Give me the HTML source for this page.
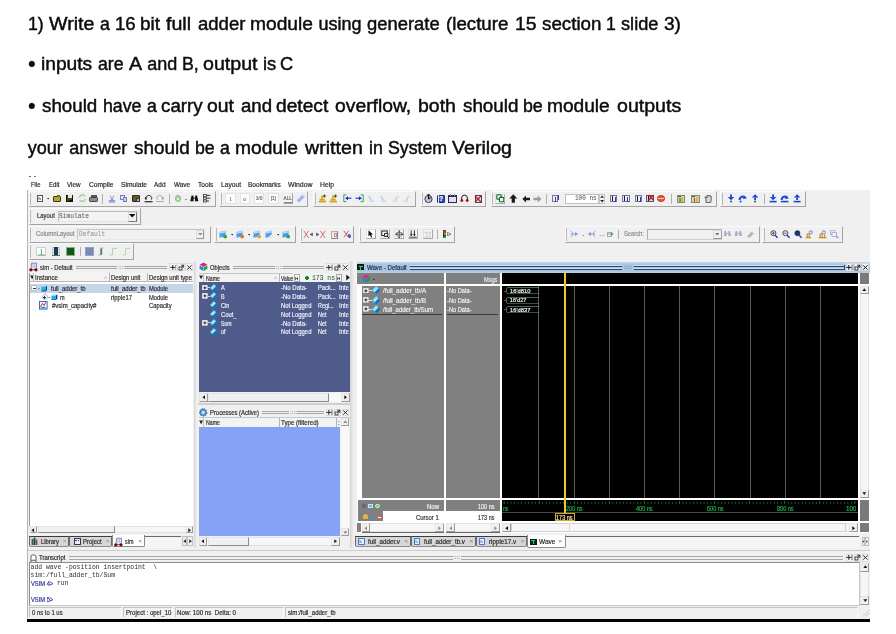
<!DOCTYPE html>
<html><head><meta charset="utf-8"><title>16 bit full adder</title>
<style>
html,body{margin:0;padding:0;background:#fff;}
body{width:896px;height:634px;position:relative;overflow:hidden;will-change:transform;font-family:"Liberation Sans",sans-serif;}
div,span,svg{position:absolute;box-sizing:border-box;}
span{white-space:pre;-webkit-text-stroke:0.18px;}
.tb{background:#f0f0f0;border-right:1px solid #a3a3a3;border-bottom:1px solid #a3a3a3;border-left:1px solid #fafafa;border-top:1px solid #fafafa;}
.sb{background:#f0f0f0;border:0.5px solid #d8d8d8;}
.btn{background:#f0f0f0;border:0.5px solid #bdbdbd;}
</style></head><body>
<span style="left:27.59px;top:13.56px;font-size:18px;line-height:21.6px;color:#0c0c0c;transform:scaleX(0.985);transform-origin:0 0;-webkit-text-stroke:0.45px;">1)</span>
<span style="left:48.80px;top:13.56px;font-size:18px;line-height:21.6px;color:#0c0c0c;transform:scaleX(1.090);transform-origin:0 0;-webkit-text-stroke:0.45px;">Write</span>
<span style="left:100.25px;top:13.56px;font-size:18px;line-height:21.6px;color:#0c0c0c;transform:scaleX(0.985);transform-origin:0 0;-webkit-text-stroke:0.45px;">a</span>
<span style="left:114.54px;top:13.56px;font-size:18px;line-height:21.6px;color:#0c0c0c;transform:scaleX(1.035);transform-origin:0 0;-webkit-text-stroke:0.45px;">16</span>
<span style="left:140.02px;top:13.56px;font-size:18px;line-height:21.6px;color:#0c0c0c;transform:scaleX(1.053);transform-origin:0 0;-webkit-text-stroke:0.45px;">bit</span>
<span style="left:166.10px;top:13.56px;font-size:18px;line-height:21.6px;color:#0c0c0c;transform:scaleX(1.090);transform-origin:0 0;-webkit-text-stroke:0.45px;">full</span>
<span style="left:197.72px;top:13.56px;font-size:18px;line-height:21.6px;color:#0c0c0c;transform:scaleX(1.029);transform-origin:0 0;-webkit-text-stroke:0.45px;">adder</span>
<span style="left:250.40px;top:13.56px;font-size:18px;line-height:21.6px;color:#0c0c0c;transform:scaleX(1.067);transform-origin:0 0;-webkit-text-stroke:0.45px;">module</span>
<span style="left:318.47px;top:13.56px;font-size:18px;line-height:21.6px;color:#0c0c0c;-webkit-text-stroke:0.45px;">using</span>
<span style="left:367.03px;top:13.56px;font-size:18px;line-height:21.6px;color:#0c0c0c;transform:scaleX(1.022);transform-origin:0 0;-webkit-text-stroke:0.45px;">generate</span>
<span style="left:446.12px;top:13.56px;font-size:18px;line-height:21.6px;color:#0c0c0c;transform:scaleX(1.040);transform-origin:0 0;-webkit-text-stroke:0.45px;">(lecture</span>
<span style="left:515.49px;top:13.56px;font-size:18px;line-height:21.6px;color:#0c0c0c;transform:scaleX(1.079);transform-origin:0 0;-webkit-text-stroke:0.45px;">15</span>
<span style="left:541.51px;top:13.56px;font-size:18px;line-height:21.6px;color:#0c0c0c;transform:scaleX(1.042);transform-origin:0 0;-webkit-text-stroke:0.45px;">section</span>
<span style="left:606.19px;top:13.56px;font-size:18px;line-height:21.6px;color:#0c0c0c;transform:scaleX(0.985);transform-origin:0 0;-webkit-text-stroke:0.45px;">1</span>
<span style="left:621.22px;top:13.56px;font-size:18px;line-height:21.6px;color:#0c0c0c;transform:scaleX(1.011);transform-origin:0 0;-webkit-text-stroke:0.45px;">slide</span>
<span style="left:663.60px;top:13.56px;font-size:18px;line-height:21.6px;color:#0c0c0c;transform:scaleX(1.061);transform-origin:0 0;-webkit-text-stroke:0.45px;">3)</span>
<span style="left:28.00px;top:51.27px;font-size:21.8px;line-height:26.16px;color:#0c0c0c;">•</span>
<span style="left:41.30px;top:53.86px;font-size:18px;line-height:21.6px;color:#0c0c0c;transform:scaleX(1.066);transform-origin:0 0;-webkit-text-stroke:0.45px;">inputs</span>
<span style="left:98.25px;top:53.86px;font-size:18px;line-height:21.6px;color:#0c0c0c;transform:scaleX(0.985);transform-origin:0 0;-webkit-text-stroke:0.45px;">are</span>
<span style="left:129.00px;top:53.86px;font-size:18px;line-height:21.6px;color:#0c0c0c;transform:scaleX(1.090);transform-origin:0 0;-webkit-text-stroke:0.45px;">A</span>
<span style="left:147.14px;top:53.86px;font-size:18px;line-height:21.6px;color:#0c0c0c;-webkit-text-stroke:0.45px;">and</span>
<span style="left:181.91px;top:53.86px;font-size:18px;line-height:21.6px;color:#0c0c0c;transform:scaleX(0.985);transform-origin:0 0;-webkit-text-stroke:0.45px;">B,</span>
<span style="left:202.79px;top:53.86px;font-size:18px;line-height:21.6px;color:#0c0c0c;transform:scaleX(1.090);transform-origin:0 0;-webkit-text-stroke:0.45px;">output</span>
<span style="left:263.06px;top:53.86px;font-size:18px;line-height:21.6px;color:#0c0c0c;transform:scaleX(1.017);transform-origin:0 0;-webkit-text-stroke:0.45px;">is</span>
<span style="left:279.84px;top:53.86px;font-size:18px;line-height:21.6px;color:#0c0c0c;transform:scaleX(1.015);transform-origin:0 0;-webkit-text-stroke:0.45px;">C</span>
<span style="left:28.00px;top:93.17px;font-size:21.8px;line-height:26.16px;color:#0c0c0c;">•</span>
<span style="left:42.31px;top:95.76px;font-size:18px;line-height:21.6px;color:#0c0c0c;transform:scaleX(1.042);transform-origin:0 0;-webkit-text-stroke:0.45px;">should</span>
<span style="left:103.09px;top:95.76px;font-size:18px;line-height:21.6px;color:#0c0c0c;transform:scaleX(0.985);transform-origin:0 0;-webkit-text-stroke:0.45px;">have</span>
<span style="left:147.05px;top:95.76px;font-size:18px;line-height:21.6px;color:#0c0c0c;transform:scaleX(0.985);transform-origin:0 0;-webkit-text-stroke:0.45px;">a</span>
<span style="left:161.11px;top:95.76px;font-size:18px;line-height:21.6px;color:#0c0c0c;transform:scaleX(1.042);transform-origin:0 0;-webkit-text-stroke:0.45px;">carry</span>
<span style="left:207.29px;top:95.76px;font-size:18px;line-height:21.6px;color:#0c0c0c;transform:scaleX(1.077);transform-origin:0 0;-webkit-text-stroke:0.45px;">out</span>
<span style="left:240.72px;top:95.76px;font-size:18px;line-height:21.6px;color:#0c0c0c;transform:scaleX(1.033);transform-origin:0 0;-webkit-text-stroke:0.45px;">and</span>
<span style="left:276.30px;top:95.76px;font-size:18px;line-height:21.6px;color:#0c0c0c;transform:scaleX(1.065);transform-origin:0 0;-webkit-text-stroke:0.45px;">detect</span>
<span style="left:335.20px;top:95.76px;font-size:18px;line-height:21.6px;color:#0c0c0c;transform:scaleX(1.073);transform-origin:0 0;-webkit-text-stroke:0.45px;">overflow,</span>
<span style="left:417.68px;top:95.76px;font-size:18px;line-height:21.6px;color:#0c0c0c;transform:scaleX(1.082);transform-origin:0 0;-webkit-text-stroke:0.45px;">both</span>
<span style="left:462.61px;top:95.76px;font-size:18px;line-height:21.6px;color:#0c0c0c;transform:scaleX(1.045);transform-origin:0 0;-webkit-text-stroke:0.45px;">should</span>
<span style="left:523.39px;top:95.76px;font-size:18px;line-height:21.6px;color:#0c0c0c;transform:scaleX(0.985);transform-origin:0 0;-webkit-text-stroke:0.45px;">be</span>
<span style="left:547.40px;top:95.76px;font-size:18px;line-height:21.6px;color:#0c0c0c;transform:scaleX(1.063);transform-origin:0 0;-webkit-text-stroke:0.45px;">module</span>
<span style="left:616.79px;top:95.76px;font-size:18px;line-height:21.6px;color:#0c0c0c;transform:scaleX(1.088);transform-origin:0 0;-webkit-text-stroke:0.45px;">outputs</span>
<span style="left:27.80px;top:137.76px;font-size:18px;line-height:21.6px;color:#0c0c0c;-webkit-text-stroke:0.45px;">your</span>
<span style="left:69.14px;top:137.76px;font-size:18px;line-height:21.6px;color:#0c0c0c;-webkit-text-stroke:0.45px;">answer</span>
<span style="left:134.10px;top:137.76px;font-size:18px;line-height:21.6px;color:#0c0c0c;transform:scaleX(1.051);transform-origin:0 0;-webkit-text-stroke:0.45px;">should</span>
<span style="left:195.19px;top:137.76px;font-size:18px;line-height:21.6px;color:#0c0c0c;transform:scaleX(0.985);transform-origin:0 0;-webkit-text-stroke:0.45px;">be</span>
<span style="left:220.35px;top:137.76px;font-size:18px;line-height:21.6px;color:#0c0c0c;transform:scaleX(0.985);transform-origin:0 0;-webkit-text-stroke:0.45px;">a</span>
<span style="left:234.80px;top:137.76px;font-size:18px;line-height:21.6px;color:#0c0c0c;transform:scaleX(1.067);transform-origin:0 0;-webkit-text-stroke:0.45px;">module</span>
<span style="left:305.01px;top:137.76px;font-size:18px;line-height:21.6px;color:#0c0c0c;transform:scaleX(1.090);transform-origin:0 0;-webkit-text-stroke:0.45px;">written</span>
<span style="left:369.49px;top:137.76px;font-size:18px;line-height:21.6px;color:#0c0c0c;transform:scaleX(0.985);transform-origin:0 0;-webkit-text-stroke:0.45px;">in</span>
<span style="left:388.45px;top:137.76px;font-size:18px;line-height:21.6px;color:#0c0c0c;transform:scaleX(0.985);transform-origin:0 0;-webkit-text-stroke:0.45px;">System</span>
<span style="left:452.00px;top:137.76px;font-size:18px;line-height:21.6px;color:#0c0c0c;transform:scaleX(1.090);transform-origin:0 0;-webkit-text-stroke:0.45px;">Verilog</span>
<div style="left:27px;top:179px;width:843.2px;height:440px;background:#f0f0f0;"></div>
<div style="left:27px;top:179px;width:843.2px;height:11px;background:#ffffff;"></div>
<div style="left:27px;top:618.8px;width:843.2px;height:3.4px;background:#000;"></div>
<span style="left:31.00px;top:181.26px;font-size:6.4px;line-height:7.68px;color:#2a2a2a;transform:scaleX(0.921);transform-origin:0 0;">File</span>
<span style="left:48.50px;top:181.26px;font-size:6.4px;line-height:7.68px;color:#2a2a2a;transform:scaleX(0.953);transform-origin:0 0;">Edit</span>
<span style="left:67.00px;top:181.26px;font-size:6.4px;line-height:7.68px;color:#2a2a2a;transform:scaleX(0.982);transform-origin:0 0;">View</span>
<span style="left:88.50px;top:181.26px;font-size:6.4px;line-height:7.68px;color:#2a2a2a;transform:scaleX(1.045);transform-origin:0 0;">Compile</span>
<span style="left:120.50px;top:181.26px;font-size:6.4px;line-height:7.68px;color:#2a2a2a;transform:scaleX(1.045);transform-origin:0 0;">Simulate</span>
<span style="left:154.00px;top:181.26px;font-size:6.4px;line-height:7.68px;color:#2a2a2a;transform:scaleX(1.011);transform-origin:0 0;">Add</span>
<span style="left:174.00px;top:181.26px;font-size:6.4px;line-height:7.68px;color:#2a2a2a;transform:scaleX(0.993);transform-origin:0 0;">Wave</span>
<span style="left:197.60px;top:181.26px;font-size:6.4px;line-height:7.68px;color:#2a2a2a;transform:scaleX(1.032);transform-origin:0 0;">Tools</span>
<span style="left:220.50px;top:181.26px;font-size:6.4px;line-height:7.68px;color:#2a2a2a;transform:scaleX(1.041);transform-origin:0 0;">Layout</span>
<span style="left:247.80px;top:181.26px;font-size:6.4px;line-height:7.68px;color:#2a2a2a;transform:scaleX(1.023);transform-origin:0 0;">Bookmarks</span>
<span style="left:288.00px;top:181.26px;font-size:6.4px;line-height:7.68px;color:#2a2a2a;transform:scaleX(1.078);transform-origin:0 0;">Window</span>
<span style="left:320.00px;top:181.26px;font-size:6.4px;line-height:7.68px;color:#2a2a2a;transform:scaleX(1.064);transform-origin:0 0;">Help</span>
<div class="tb" style="left:28.5px;top:190.5px;width:187.1px;height:16.7px;"></div>
<div style="left:30.1px;top:192.5px;width:0.7px;height:12.7px;background:#b8b8b8;"></div>
<div style="left:37.2px;top:194.9px;width:5.6px;height:7.4px;background:#fbfbfb;border:0.7px solid #555;"></div>
<span style="left:38.60px;top:197.40px;font-size:4px;line-height:4.8px;color:#555;">h</span>
<svg style="left:46.8px;top:198.4px;" width="2.4" height="1.4" viewBox="0 0 2.4 1.4"><polygon points="0,0 2.4,0 1.2,1.4" fill="#333"/></svg>
<div style="left:53px;top:196.2px;width:8px;height:5.6px;background:#b8a62c;border:0.7px solid #3a3a10;border-radius:1px;"></div>
<div style="left:56.9px;top:195.2px;width:3.4px;height:1.6px;background:#7a6d10;"></div>
<div style="left:65.7px;top:194.7px;width:7.8px;height:7.8px;background:#4a4a08;border:0.8px solid #111;"></div>
<div style="left:67.5px;top:195.3px;width:4.2px;height:3px;background:#e8e8d8;"></div>
<div style="left:68.7px;top:200.3px;width:3px;height:1.8px;background:#111;"></div>
<svg style="left:77.5px;top:194.4px;" width="8.6" height="8.4" viewBox="0 0 8.6 8.4"><path d="M1.2 3.6 A3.2 3.2 0 0 1 7 2.4 M7.4 4.8 A3.2 3.2 0 0 1 1.6 6" fill="none" stroke="#a6d6a0" stroke-width="1.7"/></svg>
<div style="left:89.3px;top:196.7px;width:9px;height:5px;background:#8c8c8c;border:0.7px solid #444;border-radius:1.2px;"></div>
<div style="left:91px;top:194.9px;width:6px;height:2.6px;background:#c8c8c8;border:0.6px solid #555;"></div>
<div style="left:102.2px;top:194px;width:0.8px;height:9.5px;background:#b0b0b0;"></div>
<svg style="left:108px;top:194.6px;" width="8" height="8" viewBox="0 0 8 8"><path d="M2 0.6 L5.4 6 M6 0.6 L2.6 6" stroke="#8d93c9" stroke-width="1"/><circle cx="2.4" cy="6.4" r="1.1" fill="none" stroke="#4a55c4" stroke-width="0.8"/><circle cx="5.6" cy="6.4" r="1.1" fill="none" stroke="#4a55c4" stroke-width="0.8"/></svg>
<div style="left:120.4px;top:194.7px;width:4.4px;height:5.4px;background:#e4e8f4;border:0.6px solid #6d7fb4;"></div>
<div style="left:122.8px;top:196.7px;width:4.4px;height:5.4px;background:#c9d3ea;border:0.6px solid #6d7fb4;"></div>
<div style="left:132.3px;top:195.2px;width:7.4px;height:7.2px;background:#6b5a1a;border:0.7px solid #222;border-radius:1px;"></div>
<div style="left:134.2px;top:194.7px;width:3.6px;height:1.8px;background:#333;"></div>
<div style="left:135.7px;top:198px;width:4.2px;height:4.4px;background:#aab4e0;border:0.5px solid #334;"></div>
<svg style="left:143.6px;top:194.2px;" width="9.6" height="9" viewBox="0 0 9.6 9"><path d="M2.2 5.4 A3 2.6 0 1 1 7.2 5.6" fill="none" stroke="#222" stroke-width="0.9"/><polygon points="0.6,3.4 3.4,3.6 1.6,6" fill="#222"/><rect x="0.6" y="7.2" width="8" height="1.1" fill="#111"/></svg>
<svg style="left:155px;top:194.2px;" width="9.6" height="9" viewBox="0 0 9.6 9"><path d="M2.4 5.6 A3 2.6 0 1 1 7.4 5.4" fill="none" stroke="#9a9a9a" stroke-width="0.8"/><polygon points="9,3.4 6.2,3.6 8,6" fill="#9a9a9a"/><rect x="1" y="7.2" width="8" height="0.8" fill="#9a9a9a"/></svg>
<div style="left:168.5px;top:194px;width:0.8px;height:9.5px;background:#b0b0b0;"></div>
<div style="left:174.8px;top:195.4px;width:6.4px;height:6.4px;background:#a9d3a2;border-radius:50%;border:0.6px solid #8cc084;"></div>
<div style="left:176.9px;top:197.5px;width:2.2px;height:2.2px;background:#e8f6e6;border-radius:50%;"></div>
<svg style="left:185px;top:198.5px;" width="2" height="1.2" viewBox="0 0 2 1.2"><polygon points="0,0 2,0 1.0,1.2" fill="#555"/></svg>
<svg style="left:190.4px;top:194.8px;" width="8.8" height="7.6" viewBox="0 0 8.8 7.6"><path d="M1.6 0.6 h1.8 v2 h1.8 v-2 h1.8 l1.4 5.6 h-3.4 v-2.6 h-1.4 v2.6 h-3.4 z" fill="#111"/></svg>
<svg style="left:203px;top:194.4px;" width="8" height="8.4" viewBox="0 0 8 8.4"><rect x="0.6" y="0.4" width="2.8" height="2" fill="none" stroke="#222" stroke-width="0.7"/><rect x="0.6" y="3.2" width="2.8" height="2" fill="none" stroke="#222" stroke-width="0.7"/><rect x="0.6" y="6" width="2.8" height="2" fill="none" stroke="#222" stroke-width="0.7"/><path d="M3.4 1.4 H7.4 M3.4 4.2 H7.4 M3.4 7 H6" stroke="#222" stroke-width="0.9"/></svg>
<div class="tb" style="left:219px;top:190.5px;width:89.3px;height:16.7px;"></div>
<div style="left:220.6px;top:192.5px;width:0.7px;height:12.7px;background:#b8b8b8;"></div>
<div style="left:225.3px;top:193.4px;width:10.4px;height:11px;background:#fdfdfd;border:0.6px solid #e2e2e2;"></div>
<span style="left:228.95px;top:195.28px;font-size:6.2px;line-height:7.44px;color:#6a6a6a;font-family:'Liberation Serif', serif;-webkit-text-stroke:0.05px;">1</span>
<div style="left:239.7px;top:193.4px;width:10.4px;height:11px;background:#fdfdfd;border:0.6px solid #e2e2e2;"></div>
<span style="left:243.35px;top:195.28px;font-size:6.2px;line-height:7.44px;color:#6a6a6a;font-family:'Liberation Serif', serif;-webkit-text-stroke:0.05px;">o</span>
<div style="left:253.8px;top:193.4px;width:10.4px;height:11px;background:#fdfdfd;border:0.6px solid #e2e2e2;"></div>
<span style="left:255.66px;top:196.12px;font-size:4.8px;line-height:5.76px;color:#6a6a6a;">1/0</span>
<div style="left:268.2px;top:193.4px;width:10.4px;height:11px;background:#fdfdfd;border:0.6px solid #e2e2e2;"></div>
<span style="left:270.73px;top:196.12px;font-size:4.8px;line-height:5.76px;color:#6a6a6a;">[1]</span>
<div style="left:282.5px;top:193.4px;width:10.4px;height:11px;background:#f4f4f4;border:0.6px solid #eaeaea;border-right-color:#a0a0a0;border-bottom-color:#a0a0a0;"></div>
<span style="left:283.61px;top:196.04px;font-size:4.6px;line-height:5.52px;color:#6a6a6a;">ALL</span>
<div style="left:283.8px;top:201.6px;width:7.8px;height:0.6px;background:#8a8a8a;"></div>
<svg style="left:295.8px;top:194.2px;" width="9.6" height="9" viewBox="0 0 9.6 9"><path d="M1 7 L6.4 1.6 L8.6 3.4 L3.2 8.6 Z" fill="#a4b8ec" stroke="#8a9ad8" stroke-width="0.5" transform="translate(0,-0.6)"/><path d="M6.4 1 L8.8 3" stroke="#c8d4f4" stroke-width="1.2"/></svg>
<div class="tb" style="left:313px;top:190.5px;width:102.6px;height:16.7px;"></div>
<div style="left:314.6px;top:192.5px;width:0.7px;height:12.7px;background:#b8b8b8;"></div>
<svg style="left:317.8px;top:194px;" width="9.2" height="9.2" viewBox="0 0 9.2 9.2"><path d="M0.6 7.6 H8 M1.6 5.6 H6.8 M4 5.6 V2.4 H6" fill="none" stroke="#d4aa1c" stroke-width="1.7"/><path d="M6.6 0.4 V3.6 M5 2 H8.2" stroke="#3a3004" stroke-width="0.8"/></svg>
<svg style="left:329.4px;top:194px;" width="9.2" height="9.2" viewBox="0 0 9.2 9.2"><path d="M0.6 7.6 H8 M1.6 5.6 H6.8 M4 5.6 V2.4 H6" fill="none" stroke="#d4aa1c" stroke-width="1.7"/><path d="M6.6 0.4 V3.6 M5 2 H8.2" stroke="#3a3004" stroke-width="0.8"/></svg>
<svg style="left:343px;top:194.2px;" width="9" height="9" viewBox="0 0 9 9"><path d="M3.4 0.8 H0.8 V7.6 H3.4" fill="none" stroke="#1f9a45" stroke-width="0.9"/><path d="M3 4.2 H8.4" stroke="#2222dd" stroke-width="1.1"/><polygon points="2.2,4.2 5,2.2 5,6.2" fill="#2222dd"/></svg>
<svg style="left:354.6px;top:194.2px;" width="9" height="9" viewBox="0 0 9 9"><path d="M5.6 0.8 H8.2 V7.6 H5.6" fill="none" stroke="#1f9a45" stroke-width="0.9"/><path d="M0.6 4.2 H6" stroke="#2222dd" stroke-width="1.1"/><polygon points="6.8,4.2 4,2.2 4,6.2" fill="#2222dd"/></svg>
<svg style="left:367px;top:194.6px;" width="8" height="8" viewBox="0 0 8 8"><path d="M0.8 1.6 H3 V6.2 H7.2 M3 3.8 H5.4" fill="none" stroke="#aac0e8" stroke-width="0.8"/></svg>
<svg style="left:379px;top:194.6px;" width="8" height="8" viewBox="0 0 8 8"><path d="M0.8 1.6 H3 V6.2 H7.2 M3 3.8 H5.4" fill="none" stroke="#aac0e8" stroke-width="0.8"/></svg>
<svg style="left:391.5px;top:194.6px;" width="8" height="8" viewBox="0 0 8 8"><path d="M7.2 1.6 H4.6 V6.2 H0.8 M4.6 3.8 H2.4" fill="none" stroke="#b8c8e4" stroke-width="0.8"/></svg>
<svg style="left:403px;top:194.6px;" width="8" height="8" viewBox="0 0 8 8"><path d="M7.2 1.6 H4.6 V6.2 H0.8 M4.6 3.8 H2.4" fill="none" stroke="#b8c8e4" stroke-width="0.8"/></svg>
<div class="tb" style="left:420.5px;top:190.5px;width:65.3px;height:16.7px;"></div>
<div style="left:422.1px;top:192.5px;width:0.7px;height:12.7px;background:#b8b8b8;"></div>
<svg style="left:424.4px;top:194.2px;" width="9" height="9" viewBox="0 0 9 9"><circle cx="4.5" cy="5" r="3.6" fill="#c4c6d4" stroke="#2a2a3a" stroke-width="0.9"/><path d="M4.5 5 V0.6 M4.5 5 L6.6 3.6" stroke="#10102a" stroke-width="1.1"/><rect x="3.4" y="0.2" width="2.2" height="1.3" fill="#10102a"/></svg>
<div style="left:436.6px;top:194.6px;width:8px;height:8px;background:#2f55b4;border:0.7px solid #1a2f70;border-radius:1px;"></div>
<div style="left:437.7px;top:194.6px;width:1.4px;height:8px;background:#dfe6f8;"></div>
<span style="left:439.25px;top:195.06px;font-size:6.4px;line-height:7.68px;color:#fff;font-weight:bold;">?</span>
<div style="left:448px;top:195.5px;width:8.6px;height:7px;background:#dfe0f0;border:0.8px solid #2a2a50;"></div>
<div style="left:448px;top:195.4px;width:8.6px;height:2px;background:#2a2a50;"></div>
<div style="left:449.8px;top:194.4px;width:1.2px;height:2px;background:#8a90c0;"></div>
<div style="left:453.6px;top:194.4px;width:1.2px;height:2px;background:#8a90c0;"></div>
<svg style="left:460.2px;top:194.4px;" width="9" height="8.6" viewBox="0 0 9 8.6"><path d="M1.6 6 V4 A2.9 2.9 0 0 1 7.4 4 V6" fill="none" stroke="#222" stroke-width="1"/><circle cx="1.8" cy="6.4" r="1.5" fill="#a01818"/><circle cx="7.2" cy="6.4" r="1.5" fill="#a01818"/></svg>
<div style="left:474.5px;top:194.6px;width:7px;height:8px;background:#dfe3f0;border:0.6px solid #445;"></div>
<svg style="left:474.4px;top:194.6px;" width="8" height="8" viewBox="0 0 8 8"><path d="M1 1 L7 7 M7 1 L1 7" stroke="#c02020" stroke-width="1.4"/></svg>
<div class="tb" style="left:490.8px;top:190.5px;width:225.8px;height:16.7px;"></div>
<div style="left:492.4px;top:192.5px;width:0.7px;height:12.7px;background:#b8b8b8;"></div>
<div style="left:494.9px;top:193.6px;width:10px;height:10px;background:#f6f6f6;border:0.6px solid #e0e0e0;border-right-color:#a8a8a8;border-bottom-color:#a8a8a8;"></div>
<svg style="left:495.6px;top:194.4px;" width="8.6" height="8.6" viewBox="0 0 8.6 8.6"><rect x="0.8" y="0.8" width="4.4" height="4.4" rx="0.8" fill="#eaf6ea" stroke="#0c6a2c" stroke-width="1.1"/><rect x="3.4" y="3.4" width="4.4" height="4.4" rx="0.8" fill="#eaf6ea" stroke="#0c6a2c" stroke-width="1.1"/></svg>
<svg style="left:509px;top:194.2px;" width="8.6" height="9" viewBox="0 0 8.6 9"><polygon points="4.3,0.3 8.3,4.4 5.9,4.4 5.9,8.8 2.7,8.8 2.7,4.4 0.3,4.4" fill="#1a1a1a"/></svg>
<svg style="left:521.6px;top:194.6px;" width="8.8" height="8" viewBox="0 0 8.8 8"><polygon points="0.4,4 4,0.6 4,2.7 8.4,2.7 8.4,5.3 4,5.3 4,7.4" fill="#1a1a1a"/></svg>
<svg style="left:533.4px;top:194.6px;" width="8.8" height="8" viewBox="0 0 8.8 8"><polygon points="8.4,4 4.8,0.6 4.8,2.7 0.4,2.7 0.4,5.3 4.8,5.3 4.8,7.4" fill="#9c9c9c"/></svg>
<div style="left:546.3px;top:194px;width:0.8px;height:9.5px;background:#b0b0b0;"></div>
<div style="left:552.4px;top:194.8px;width:6px;height:7.6px;background:#eceef6;border:0.6px solid #778;"></div>
<div style="left:554.55px;top:196.5px;width:0.9px;height:5px;background:#3a4a9a;"></div>
<div style="left:558px;top:195.1px;width:1.2px;height:5px;background:#2a3ad0;"></div>
<div style="left:564.5px;top:193.8px;width:34px;height:10.2px;background:#ffffff;border:0.6px solid #c0c0c0;"></div>
<span style="left:574.60px;top:194.48px;font-size:7.2px;line-height:8.64px;color:#555;font-family:'Liberation Mono', monospace;-webkit-text-stroke:0.05px;transform:scaleX(0.834);transform-origin:0 0;">100 ns</span>
<div style="left:599.2px;top:193.8px;width:5.8px;height:10.2px;background:#f4f4f4;border:0.5px solid #c4c4c4;"></div>
<svg style="left:600px;top:195px;" width="4.2" height="8" viewBox="0 0 4.2 8"><polygon points="2.1,0.4 4,2.8 0.2,2.8" fill="#222"/><polygon points="2.1,7.4 4,5 0.2,5" fill="#222"/></svg>
<div style="left:609.7px;top:194.7px;width:7.4px;height:7.8px;background:#eceef6;border:0.6px solid #778;"></div>
<div style="left:611.75px;top:196px;width:0.9px;height:4.8px;background:#1a1a3a;"></div>
<div style="left:614.6px;top:196.8px;width:0.8px;height:4.4px;background:#2a3ad0;"></div>
<div style="left:614px;top:200.6px;width:2px;height:1.6px;background:#2a3ad0;"></div>
<div style="left:622.2px;top:194.7px;width:7.4px;height:7.8px;background:#eceef6;border:0.6px solid #778;"></div>
<div style="left:624.25px;top:196px;width:0.9px;height:4.8px;background:#1a1a3a;"></div>
<div style="left:627.1px;top:196.8px;width:0.8px;height:4.4px;background:#2a3ad0;"></div>
<div style="left:626.5px;top:200.6px;width:2px;height:1.6px;background:#2a3ad0;"></div>
<div style="left:634.7px;top:194.7px;width:7.4px;height:7.8px;background:#eceef6;border:0.6px solid #778;"></div>
<div style="left:636.75px;top:196px;width:0.9px;height:4.8px;background:#1a1a3a;"></div>
<div style="left:639.6px;top:196.8px;width:0.8px;height:4.4px;background:#2a3ad0;"></div>
<div style="left:639px;top:200.6px;width:2px;height:1.6px;background:#2a3ad0;"></div>
<div style="left:646.3px;top:194.7px;width:7.4px;height:7.8px;background:#dcdce8;border:0.6px solid #556;"></div>
<div style="left:648px;top:196.1px;width:1.2px;height:5px;background:#1a1a3a;"></div>
<svg style="left:647px;top:194.4px;" width="7.4" height="7.4" viewBox="0 0 7.4 7.4"><path d="M1.6 1 L6.6 6.2 M6.6 1 L1.6 6.2" stroke="#c01818" stroke-width="1.4"/></svg>
<div style="left:657.3px;top:195.1px;width:7.4px;height:7.4px;background:#e2503e;border-radius:50%;border:0.5px solid #c03828;"></div>
<div style="left:657.8px;top:198.15px;width:6.4px;height:1.3px;background:#f6cfc8;"></div>
<div style="left:670.5px;top:194px;width:0.8px;height:9.5px;background:#b0b0b0;"></div>
<div style="left:676.8px;top:195px;width:8.4px;height:8px;background:#d4d0c0;border:0.6px solid #8a8878;"></div>
<div style="left:681.3px;top:197.3px;width:2.2px;height:5px;background:#d8b838;"></div>
<div style="left:679.2px;top:198.4px;width:1.6px;height:4px;background:#58a868;"></div>
<div style="left:677.9px;top:195.8px;width:3px;height:1.6px;background:#3a6a3a;"></div>
<div style="left:691.3px;top:195px;width:8.4px;height:8px;background:#d4d0c0;border:0.6px solid #8a8878;"></div>
<div style="left:695.8px;top:197.3px;width:2.2px;height:5px;background:#d8b838;"></div>
<div style="left:693.7px;top:198.4px;width:1.6px;height:4px;background:#b04848;"></div>
<div style="left:692.4px;top:195.8px;width:3px;height:1.6px;background:#3a6a3a;"></div>
<svg style="left:704px;top:194.6px;" width="8.4" height="8.4" viewBox="0 0 8.4 8.4"><path d="M2 7.6 V4 L1 2.6 A0.8 0.8 0 0 1 2.4 2 L3 3 V1 A0.7 0.7 0 0 1 4.4 1 V0.8 A0.7 0.7 0 0 1 5.8 1 V1.4 A0.7 0.7 0 0 1 7.2 1.8 V5.4 L6.6 7.6 Z" fill="#d8d8d8" stroke="#2a2a2a" stroke-width="0.7"/></svg>
<div class="tb" style="left:720.2px;top:190.5px;width:85.6px;height:16.7px;"></div>
<div style="left:721.8px;top:192.5px;width:0.7px;height:12.7px;background:#b8b8b8;"></div>
<svg style="left:727.1px;top:194.2px;" width="8.2" height="9" viewBox="0 0 8.2 9"><rect x="3.2" y="0.4" width="1.8" height="3" fill="#1c48d4"/><polygon points="0.8,3 7.4,3 4.1,6.2" fill="#1c48d4"/><circle cx="4.1" cy="7.6" r="1" fill="#1c48d4"/></svg>
<svg style="left:737.9px;top:194.2px;" width="9" height="9" viewBox="0 0 9 9"><path d="M1.6 6 A3 3.4 0 0 1 6.6 3.4" fill="none" stroke="#1c48d4" stroke-width="2"/><polygon points="8.8,4.6 4.6,5 6.8,1.4" fill="#1c48d4"/><circle cx="2.6" cy="7.6" r="1" fill="#1c48d4"/></svg>
<svg style="left:751.2px;top:194.2px;" width="8.2" height="9" viewBox="0 0 8.2 9"><polygon points="0.8,3.6 7.4,3.6 4.1,0.3" fill="#1c48d4"/><rect x="3.2" y="3.4" width="1.8" height="2.6" fill="#1c48d4"/><circle cx="4.1" cy="7.6" r="1" fill="#1c48d4"/></svg>
<div style="left:763.5px;top:194px;width:0.8px;height:9.5px;background:#b0b0b0;"></div>
<svg style="left:769px;top:194.2px;" width="8.2" height="9" viewBox="0 0 8.2 9"><rect x="3.2" y="0.4" width="1.8" height="3" fill="#1c48d4"/><polygon points="0.8,3 7.4,3 4.1,6.2" fill="#1c48d4"/><rect x="0.6" y="6.8" width="7" height="1.6" fill="#1c48d4"/></svg>
<svg style="left:780.3px;top:194.2px;" width="9" height="9" viewBox="0 0 9 9"><path d="M1.6 6 A3 3.4 0 0 1 6.6 3.4" fill="none" stroke="#1c48d4" stroke-width="2"/><polygon points="8.8,4.6 4.6,5 6.8,1.4" fill="#1c48d4"/><rect x="0.8" y="6.8" width="7.6" height="1.6" fill="#1c48d4"/></svg>
<svg style="left:793.2px;top:194.2px;" width="8.2" height="9" viewBox="0 0 8.2 9"><polygon points="0.8,3.6 7.4,3.6 4.1,0.3" fill="#1c48d4"/><rect x="3.2" y="3.4" width="1.8" height="2.6" fill="#1c48d4"/><rect x="0.6" y="6.8" width="7" height="1.6" fill="#1c48d4"/></svg>
<div class="tb" style="left:28.5px;top:208px;width:112.9px;height:17.4px;"></div>
<div style="left:30.1px;top:210px;width:0.7px;height:13.4px;background:#b8b8b8;"></div>
<span style="left:37.00px;top:212.42px;font-size:6.3px;line-height:7.56px;color:#333;transform:scaleX(0.941);transform-origin:0 0;">Layout</span>
<div style="left:58.2px;top:211px;width:79.4px;height:11.4px;background:#f3f3f3;border:0.6px solid #e4e4e4;border-top-color:#b8b8b8;border-left-color:#b8b8b8;"></div>
<span style="left:59.40px;top:212.28px;font-size:7.2px;line-height:8.64px;color:#555;font-family:'Liberation Mono', monospace;-webkit-text-stroke:0.05px;transform:scaleX(0.869);transform-origin:0 0;">Simulate</span>
<div style="left:127.6px;top:211.8px;width:9.2px;height:10px;background:#f0f0f0;border:0.6px solid #e0e0e0;border-right-color:#777;border-bottom-color:#777;"></div>
<svg style="left:128.8px;top:214.2px;" width="6.4" height="3.6" viewBox="0 0 6.4 3.6"><polygon points="0,0 6.4,0 3.2,3.6" fill="#0a0a0a"/></svg>
<div class="tb" style="left:28.5px;top:226px;width:182.3px;height:16.6px;"></div>
<div style="left:30.1px;top:228px;width:0.7px;height:12.6px;background:#b8b8b8;"></div>
<span style="left:36.40px;top:230.22px;font-size:6.3px;line-height:7.56px;color:#8a8a8a;transform:scaleX(0.951);transform-origin:0 0;">ColumnLayout</span>
<div style="left:77.4px;top:229.4px;width:127.6px;height:10.6px;background:#f1f1f1;border:0.6px solid #e8e8e8;border-top-color:#c4c4c4;border-left-color:#c4c4c4;"></div>
<span style="left:78.80px;top:230.28px;font-size:7.2px;line-height:8.64px;color:#909090;font-family:'Liberation Mono', monospace;-webkit-text-stroke:0.05px;transform:scaleX(0.867);transform-origin:0 0;">Default</span>
<div style="left:196px;top:230px;width:8.4px;height:9.4px;background:#f0f0f0;border:0.6px solid #d8d8d8;border-right-color:#999;border-bottom-color:#999;"></div>
<svg style="left:198.1px;top:232.9px;" width="4.6" height="2.6" viewBox="0 0 4.6 2.6"><polygon points="0,0 4.6,0 2.3,2.6" fill="#8a8a8a"/></svg>
<div class="tb" style="left:214px;top:226px;width:81.6px;height:16.6px;"></div>
<div style="left:215.6px;top:228px;width:0.7px;height:12.6px;background:#b8b8b8;"></div>
<svg style="left:218.9px;top:229.8px;" width="9.2" height="9" viewBox="0 0 9.2 9"><polygon points="0.6,2.2 6.6,0.8 6.6,6.4 0.6,7.6" fill="#4a9ce8" stroke="#8cc4f4" stroke-width="0.5"/><polygon points="0.6,2.2 6.6,0.8 6.6,2.4 0.6,3.8" fill="#b8dcf8"/><circle cx="6.2" cy="6.6" r="1.9" fill="#3aa43a"/></svg>
<svg style="left:230.7px;top:234.05px;" width="2.4" height="1.5" viewBox="0 0 2.4 1.5"><polygon points="0,0 2.4,0 1.2,1.5" fill="#222"/></svg>
<svg style="left:236.3px;top:229.8px;" width="9.2" height="9" viewBox="0 0 9.2 9"><polygon points="0.6,2.2 6.6,0.8 6.6,6.4 0.6,7.6" fill="#4a9ce8" stroke="#8cc4f4" stroke-width="0.5"/><polygon points="0.6,2.2 6.6,0.8 6.6,2.4 0.6,3.8" fill="#b8dcf8"/><circle cx="6.2" cy="6.6" r="1.9" fill="#e07a20"/></svg>
<svg style="left:247.7px;top:234.05px;" width="2.4" height="1.5" viewBox="0 0 2.4 1.5"><polygon points="0,0 2.4,0 1.2,1.5" fill="#222"/></svg>
<svg style="left:253px;top:229.8px;" width="9.2" height="9" viewBox="0 0 9.2 9"><polygon points="0.6,2.2 6.6,0.8 6.6,6.4 0.6,7.6" fill="#4a9ce8" stroke="#8cc4f4" stroke-width="0.5"/><polygon points="0.6,2.2 6.6,0.8 6.6,2.4 0.6,3.8" fill="#b8dcf8"/><circle cx="6.2" cy="6.6" r="1.9" fill="#e8a838"/></svg>
<svg style="left:265.1px;top:229.8px;" width="9.2" height="9" viewBox="0 0 9.2 9"><polygon points="0.6,2.2 6.6,0.8 6.6,6.4 0.6,7.6" fill="#4a9ce8" stroke="#8cc4f4" stroke-width="0.5"/><polygon points="0.6,2.2 6.6,0.8 6.6,2.4 0.6,3.8" fill="#b8dcf8"/><circle cx="6.2" cy="6.6" r="1.9" fill="#dce8fc"/></svg>
<svg style="left:276.8px;top:234.05px;" width="2.4" height="1.5" viewBox="0 0 2.4 1.5"><polygon points="0,0 2.4,0 1.2,1.5" fill="#222"/></svg>
<svg style="left:282.4px;top:229.8px;" width="9.2" height="9" viewBox="0 0 9.2 9"><polygon points="0.6,2.2 6.6,0.8 6.6,6.4 0.6,7.6" fill="#4a9ce8" stroke="#8cc4f4" stroke-width="0.5"/><polygon points="0.6,2.2 6.6,0.8 6.6,2.4 0.6,3.8" fill="#b8dcf8"/><circle cx="6.2" cy="6.6" r="1.9" fill="#2ea44a"/></svg>
<div class="tb" style="left:299.7px;top:226px;width:53.9px;height:16.6px;"></div>
<div style="left:301.3px;top:228px;width:0.7px;height:12.6px;background:#b8b8b8;"></div>
<svg style="left:302.6px;top:229.8px;" width="11" height="9" viewBox="0 0 11 9"><path d="M0.8 0.8 L5.6 8 M5.6 0.8 L0.8 8" stroke="#cc6868" stroke-width="0.9"/><polygon points="9.8,2.6 9.8,6.2 6.6,4.4" fill="#555"/></svg>
<svg style="left:315px;top:229.8px;" width="11" height="9" viewBox="0 0 11 9"><path d="M5.4 0.8 L10.2 8 M10.2 0.8 L5.4 8" stroke="#cc6868" stroke-width="0.9"/><polygon points="1.2,2.6 1.2,6.2 4.4,4.4" fill="#555"/></svg>
<div style="left:331.1px;top:230.6px;width:7.4px;height:8px;background:#eeeae8;border:0.6px solid #b4aca8;border-right-color:#8a8480;border-bottom-color:#8a8480;"></div>
<div style="left:333.5px;top:233px;width:3.4px;height:4.4px;background:#f4e8e8;border:0.5px solid #c89090;"></div>
<svg style="left:343.4px;top:229.8px;" width="9" height="9" viewBox="0 0 9 9"><path d="M0.8 0.8 L5.6 7.4 M5.6 0.8 L0.8 7.4" stroke="#cc5a5a" stroke-width="1"/><ellipse cx="6.4" cy="6" rx="1.5" ry="2" fill="#4a58d0" transform="rotate(-30 6.4 6)"/></svg>
<div class="tb" style="left:358.6px;top:226px;width:96.2px;height:16.6px;"></div>
<div style="left:360.2px;top:228px;width:0.7px;height:12.6px;background:#b8b8b8;"></div>
<div style="left:365.5px;top:229.2px;width:10px;height:10px;background:#ffffff;border:0.6px solid #e0e0e0;border-right-color:#a8a8a8;border-bottom-color:#a8a8a8;"></div>
<svg style="left:368px;top:230.4px;" width="5.6" height="7.8" viewBox="0 0 5.6 7.8"><polygon points="0.5,0.3 0.5,6.2 2,5 3.1,7.4 4.2,6.9 3.1,4.6 5,4.6" fill="#0a0a0a"/></svg>
<div style="left:380.4px;top:229.2px;width:10px;height:10px;background:#f4f4f4;border:0.6px solid #e0e0e0;border-right-color:#a8a8a8;border-bottom-color:#a8a8a8;"></div>
<svg style="left:381.2px;top:230.2px;" width="8.6" height="8.4" viewBox="0 0 8.6 8.4"><rect x="0.8" y="1" width="5.4" height="4.6" fill="#fff" stroke="#1a1a1a" stroke-width="1"/><rect x="3.6" y="3.4" width="3.2" height="3" fill="#fff" stroke="#1a1a1a" stroke-width="0.9"/><path d="M5.6 5.6 L8 8" stroke="#1a1a1a" stroke-width="1"/></svg>
<div style="left:394px;top:229.2px;width:10px;height:10px;background:#f4f4f4;border:0.6px solid #e0e0e0;border-right-color:#a8a8a8;border-bottom-color:#a8a8a8;"></div>
<svg style="left:394.8px;top:230px;" width="8.4" height="8.4" viewBox="0 0 8.4 8.4"><rect x="2" y="2.4" width="4.4" height="3.6" fill="none" stroke="#555" stroke-width="0.6"/><path d="M4.2 0.8 V7.6 M0.8 4.2 H7.6" stroke="#333" stroke-width="0.7"/><polygon points="4.2,0 5.3,1.5 3.1,1.5" fill="#333"/><polygon points="4.2,8.4 5.3,6.9 3.1,6.9" fill="#333"/><polygon points="0,4.2 1.5,3.1 1.5,5.3" fill="#333"/><polygon points="8.4,4.2 6.9,3.1 6.9,5.3" fill="#333"/></svg>
<div style="left:407.9px;top:229.2px;width:10px;height:10px;background:#f4f4f4;border:0.6px solid #e0e0e0;border-right-color:#a8a8a8;border-bottom-color:#a8a8a8;"></div>
<svg style="left:409px;top:230.4px;" width="7.8" height="7.8" viewBox="0 0 7.8 7.8"><path d="M2.2 0.4 V5.6 M5.4 0.4 V5.6" stroke="#1a1a1a" stroke-width="0.9"/><polygon points="2.2,6.2 0.9,4.2 3.5,4.2" fill="#1a1a1a"/><polygon points="5.4,6.2 4.1,4.2 6.7,4.2" fill="#1a1a1a"/><path d="M0.2 7.2 H7.6" stroke="#1a1a1a" stroke-width="0.8"/></svg>
<div style="left:422.7px;top:229.2px;width:10px;height:10px;background:#f4f4f4;border:0.6px solid #e0e0e0;border-right-color:#a8a8a8;border-bottom-color:#a8a8a8;"></div>
<svg style="left:423.8px;top:230.4px;" width="7.8" height="7.8" viewBox="0 0 7.8 7.8"><path d="M0.6 2.2 H3 V5.8 M4.6 2.2 H7 M5.8 2.2 V5.8 M0.4 7 H7.4" stroke="#b0b0b0" stroke-width="0.7" fill="none"/></svg>
<div style="left:437.1px;top:230px;width:0.8px;height:9.4px;background:#b0b0b0;"></div>
<div style="left:442.7px;top:230.1px;width:3.8px;height:8.2px;background:#143a1c;border-radius:0.8px;"></div>
<div style="left:443.45px;top:230.55px;width:2.3px;height:2.3px;background:#e82a2a;border-radius:50%;"></div>
<div style="left:443.55px;top:233.15px;width:2.1px;height:2.1px;background:#d8c030;border-radius:50%;"></div>
<div style="left:443.55px;top:235.65px;width:2.1px;height:2.1px;background:#30c848;border-radius:50%;"></div>
<svg style="left:447.2px;top:232px;" width="4.4" height="4.4" viewBox="0 0 4.4 4.4"><polygon points="0.4,0.4 4,2.2 0.4,4" fill="#f0f0f0" stroke="#333" stroke-width="0.6"/></svg>
<div class="tb" style="left:564.5px;top:226px;width:195.1px;height:16.8px;"></div>
<div style="left:566.1px;top:228px;width:0.7px;height:12.8px;background:#b8b8b8;"></div>
<svg style="left:570px;top:230.2px;" width="9" height="8" viewBox="0 0 9 8"><g transform=""><path d="M0.6 1.2 A3.4 3 0 0 1 0.6 6.8 M0.6 4 H5.4" fill="none" stroke="#7d9ad8" stroke-width="0.8"/><polygon points="8.2,4 5,2 5,6" fill="#7d9ad8"/></g></svg>
<span style="left:582.20px;top:231.50px;font-size:5.5px;line-height:6.6px;color:#555;">-</span>
<svg style="left:587px;top:230.2px;" width="9" height="8" viewBox="0 0 9 8"><g transform="translate(9,0) scale(-1,1)"><path d="M0.6 1.2 A3.4 3 0 0 1 0.6 6.8 M0.6 4 H5.4" fill="none" stroke="#7d9ad8" stroke-width="0.8"/><polygon points="8.2,4 5,2 5,6" fill="#7d9ad8"/></g></svg>
<span style="left:599.40px;top:231.50px;font-size:5.5px;line-height:6.6px;color:#555;">-</span>
<div style="left:607.4px;top:231.5px;width:4.4px;height:5.4px;background:#f8f8f8;border:0.5px solid #a0a8c0;"></div>
<svg style="left:607px;top:231.2px;" width="8" height="6" viewBox="0 0 8 6"><path d="M0.4 3 H4" stroke="#50a050" stroke-width="0.8"/><polygon points="6.6,3 3.8,1 3.8,5" fill="#50a050"/></svg>
<span style="left:602.60px;top:231.50px;font-size:5.5px;line-height:6.6px;color:#555;">-</span>
<div style="left:618.4px;top:230px;width:0.8px;height:9.4px;background:#b0b0b0;"></div>
<span style="left:624.00px;top:230.42px;font-size:6.3px;line-height:7.56px;color:#8a8a8a;transform:scaleX(0.912);transform-origin:0 0;">Search:</span>
<div style="left:647.4px;top:229.4px;width:74.6px;height:10.6px;background:#f1f1f1;border:0.6px solid #d0d0d0;border-top-color:#b0b0b0;border-left-color:#b0b0b0;"></div>
<div style="left:712.6px;top:230px;width:9px;height:9.4px;background:#f0f0f0;border:0.6px solid #d8d8d8;border-right-color:#999;border-bottom-color:#999;"></div>
<svg style="left:714.7px;top:233.1px;" width="4.6" height="2.6" viewBox="0 0 4.6 2.6"><polygon points="0,0 4.6,0 2.3,2.6" fill="#777"/></svg>
<svg style="left:723.2px;top:230.2px;" width="9" height="8" viewBox="0 0 9 8"><path d="M1.6 1 h1.6 v1.8 h2.2 v-1.8 h1.6 l1.2 5 h-3 v-2.2 h-1.6 v2.2 h-3 z" fill="#a8b0cc"/></svg>
<svg style="left:733.9px;top:230.2px;" width="9" height="8" viewBox="0 0 9 8"><path d="M1.6 1 h1.6 v1.8 h2.2 v-1.8 h1.6 l1.2 5 h-3 v-2.2 h-1.6 v2.2 h-3 z" fill="#a8b0cc"/></svg>
<svg style="left:745.5px;top:230.2px;" width="9" height="8" viewBox="0 0 9 8"><path d="M1 6.6 L5.6 1.6 L7.8 3.4 L3.4 8 Z" fill="#b4b4bc"/></svg>
<div class="tb" style="left:762px;top:226px;width:80.8px;height:16.8px;"></div>
<div style="left:763.6px;top:228px;width:0.7px;height:12.8px;background:#b8b8b8;"></div>
<svg style="left:769.5px;top:230.2px;" width="8.4" height="8.4" viewBox="0 0 8.4 8.4"><circle cx="3.4" cy="3.2" r="2.5" fill="#f4f4fc" stroke="#223" stroke-width="0.8"/><path d="M5.2 5.2 L7.6 7.8" stroke="#2a3ab0" stroke-width="1.5"/><path d="M2 3.2 H4.8 M3.4 1.8 V4.6" stroke="#223" stroke-width="0.7"/></svg>
<svg style="left:781.6px;top:230.2px;" width="8.4" height="8.4" viewBox="0 0 8.4 8.4"><circle cx="3.4" cy="3.2" r="2.5" fill="#f4f4fc" stroke="#223" stroke-width="0.8"/><path d="M5.2 5.2 L7.6 7.8" stroke="#2a3ab0" stroke-width="1.5"/><path d="M2 3.2 H4.8" stroke="#223" stroke-width="0.7"/></svg>
<svg style="left:794px;top:230.2px;" width="8.4" height="8.4" viewBox="0 0 8.4 8.4"><circle cx="3.4" cy="3.2" r="2.5" fill="#0a3a8a" stroke="#223" stroke-width="0.8"/><path d="M5.2 5.2 L7.6 7.8" stroke="#2a3ab0" stroke-width="1.5"/></svg>
<svg style="left:805.4px;top:230px;" width="9" height="8.6" viewBox="0 0 9 8.6"><path d="M0.8 7.6 H6 M2.2 7.4 V4 H4.2 V7.4" fill="none" stroke="#c88a1a" stroke-width="1.1"/><circle cx="5.8" cy="2.4" r="1.6" fill="#e8ecfc" stroke="#4a5ac0" stroke-width="0.7"/></svg>
<svg style="left:817.9px;top:230px;" width="9" height="8.6" viewBox="0 0 9 8.6"><path d="M0.8 7.6 H6 M2.2 7.4 V4 H4.2 V7.4" fill="none" stroke="#c88a1a" stroke-width="1.1"/><circle cx="5.8" cy="2.4" r="1.6" fill="#e8ecfc" stroke="#4a5ac0" stroke-width="0.7"/><path d="M6 7.6 H8.4 M6.6 7.4 V4.6" stroke="#c88a1a" stroke-width="1.1"/></svg>
<svg style="left:829.8px;top:230.2px;" width="9" height="8.4" viewBox="0 0 9 8.4"><rect x="0.6" y="0.8" width="4.4" height="4" fill="#eef" stroke="#8a94c8" stroke-width="0.6"/><rect x="2" y="2.4" width="4.4" height="4" fill="#eef" stroke="#8a94c8" stroke-width="0.6"/><path d="M6 6 L8.2 8" stroke="#7a86c0" stroke-width="1.1"/></svg>
<div class="tb" style="left:28.5px;top:243.4px;width:105.3px;height:16.8px;"></div>
<div style="left:30.1px;top:245.4px;width:0.7px;height:12.8px;background:#b8b8b8;"></div>
<div style="left:36.4px;top:246.8px;width:10px;height:9.6px;background:#fdfdfd;border:0.6px solid #cfcfcf;"></div>
<svg style="left:37px;top:247.6px;" width="9" height="8.4" viewBox="0 0 9 8.4"><path d="M4.4 1 V7 M1 7 H8" stroke="#5aa86a" stroke-width="0.9" fill="none"/></svg>
<div style="left:51.7px;top:246.9px;width:8.6px;height:9.4px;background:#e4e4e4;border:0.6px solid #c4c4c4;"></div>
<div style="left:54.1px;top:247.2px;width:4.2px;height:8.4px;background:#1a3a5c;"></div>
<div style="left:52px;top:255.35px;width:8px;height:0.9px;background:#4a7a5a;"></div>
<div style="left:65.6px;top:246.8px;width:9.6px;height:9.6px;background:#0f5a16;border:0.6px solid #8ab08a;"></div>
<div style="left:79.9px;top:247px;width:0.8px;height:9.4px;background:#b0b0b0;"></div>
<div style="left:84.7px;top:247.1px;width:9.4px;height:9px;background:#7b88b8;border:0.5px solid #98a2c8;"></div>
<svg style="left:97px;top:247.2px;" width="8" height="9" viewBox="0 0 8 9"><path d="M1 8 H3.4 V1 H6.6" stroke="#9ab89a" stroke-width="0.9" fill="none"/><rect x="3.6" y="1.4" width="1.6" height="6.4" fill="#55708a"/></svg>
<svg style="left:109px;top:247.2px;" width="8.6" height="9" viewBox="0 0 8.6 9"><path d="M0.6 7.8 H3.6 V1.4 H8" stroke="#a8cca8" stroke-width="0.9" fill="none"/></svg>
<svg style="left:121.6px;top:247.2px;" width="8.6" height="9" viewBox="0 0 8.6 9"><path d="M0.6 7.8 H3.6 V1.4 H8" stroke="#b4d48c" stroke-width="0.9" fill="none"/></svg>
<svg style="left:28.6px;top:262px;" width="9" height="10" viewBox="0 0 9 10"><path d="M2 7 L2.6 1.2 H7.6 L7.2 7" fill="#f4f6fc" stroke="#4a5a80" stroke-width="0.7"/><path d="M4.2 1.4 L3.8 6.4 M5.8 1.4 L5.6 6.4" stroke="#8a9ac8" stroke-width="0.7"/><path d="M1.8 7.8 H7" stroke="#5a0a0a" stroke-width="0.8"/><circle cx="1.8" cy="7.8" r="1.6" fill="#6a0a12"/><circle cx="7" cy="7.8" r="1.6" fill="#6a0a12"/></svg>
<span style="left:39.60px;top:263.82px;font-size:6.3px;line-height:7.56px;color:#2b2b2b;transform:scaleX(0.922);transform-origin:0 0;">sim - Default</span>
<div style="left:75.5px;top:265.7px;width:91.5px;height:0.7px;background:#a6a6a6;"></div>
<div style="left:75.5px;top:268px;width:91.5px;height:0.7px;background:#a6a6a6;"></div>
<div style="left:117px;top:265px;width:8px;height:4.4px;background:#f0f0f0;"></div>
<span style="left:117.50px;top:264.64px;font-size:4.6px;line-height:5.52px;color:#9a9a9a;transform:scaleX(1.370);transform-origin:0 0;">::::</span>
<div style="left:169.4px;top:263.4px;width:7.4px;height:7.6px;background:#f6f6f6;border:0.5px solid #dcdcdc;"></div>
<div style="left:177.4px;top:263.4px;width:7.4px;height:7.6px;background:#f6f6f6;border:0.5px solid #dcdcdc;"></div>
<div style="left:185.4px;top:263.4px;width:7.4px;height:7.6px;background:#f6f6f6;border:0.5px solid #dcdcdc;"></div>
<svg style="left:169.6px;top:263.8px;" width="6.8" height="6.8" viewBox="0 0 6.8 6.8"><path d="M2.8 1 V5.8 M0.4 3.4 H5.2" stroke="#222" stroke-width="1"/><path d="M5.9 0.8 V6" stroke="#222" stroke-width="0.6"/></svg>
<svg style="left:177.6px;top:263.8px;" width="6.8" height="6.8" viewBox="0 0 6.8 6.8"><rect x="1" y="3" width="3" height="3" fill="none" stroke="#222" stroke-width="0.8"/><path d="M3.2 1.2 H5.8 V4 M5.8 1.2 L3.6 3.4" fill="none" stroke="#222" stroke-width="0.9"/></svg>
<svg style="left:185.6px;top:263.8px;" width="6.8" height="6.8" viewBox="0 0 6.8 6.8"><path d="M1.2 1.4 L5.6 5.6 M5.6 1.4 L1.2 5.6" stroke="#222" stroke-width="0.95"/></svg>
<div style="left:29px;top:272.6px;width:164.4px;height:253.4px;background:#ffffff;border-left:1px solid #9a9a9a;border-top:0.6px solid #c8c8c8;"></div>
<div style="left:29.6px;top:273px;width:163.8px;height:9.4px;background:#f3f3f3;border-bottom:0.7px solid #b8b8b8;"></div>
<svg style="left:29.6px;top:275px;" width="4.2" height="4.6" viewBox="0 0 4.2 4.6"><polygon points="0.2,0.4 4,0.4 2.1,4.2" fill="#222"/></svg>
<div style="left:33.4px;top:273.4px;width:0.8px;height:8.6px;background:#c0c0c0;"></div>
<span style="left:35.00px;top:274.42px;font-size:6.3px;line-height:7.56px;color:#2b2b2b;transform:scaleX(0.957);transform-origin:0 0;">Instance</span>
<svg style="left:104px;top:275.8px;" width="3.4" height="3.4" viewBox="0 0 3.4 3.4"><polygon points="1.7,0.4 3.2,3 0.2,3" fill="none" stroke="#999" stroke-width="0.4"/></svg>
<div style="left:109.1px;top:273.4px;width:0.8px;height:8.6px;background:#b4b4b4;"></div>
<span style="left:111.00px;top:274.42px;font-size:6.3px;line-height:7.56px;color:#2b2b2b;transform:scaleX(0.933);transform-origin:0 0;">Design unit</span>
<div style="left:147.3px;top:273.4px;width:0.8px;height:8.6px;background:#b4b4b4;"></div>
<span style="left:149.00px;top:274.42px;font-size:6.3px;line-height:7.56px;color:#2b2b2b;transform:scaleX(0.952);transform-origin:0 0;">Design unit type</span>
<div style="left:30px;top:283.8px;width:163.4px;height:8.8px;background:#c5d6e8;"></div>
<div style="left:31.4px;top:285.4px;width:6px;height:6px;background:#fdfdfd;border:0.6px solid #b4bcc8;border-radius:1.2px;"></div>
<div style="left:32.9px;top:288px;width:3px;height:0.8px;background:#334;"></div>
<div style="left:37.6px;top:288.1px;width:2.4px;height:0.6px;background:#9aa2ac;"></div>
<svg style="left:40.6px;top:285px;" width="6.8" height="6.6" viewBox="0 0 6.8 6.6"><polygon points="0.4,1.6 4.8,1.6 4.8,6.2 0.4,6.2" fill="#1cb4ea"/><polygon points="0.4,1.6 1.8,0.4 6.4,0.4 4.8,1.6" fill="#8adcf8"/><polygon points="4.8,1.6 6.4,0.4 6.4,4.8 4.8,6.2" fill="#0a3c8c"/><rect x="0.4" y="5.6" width="4.6" height="0.8" fill="#0a3c8c"/></svg>
<span style="left:51.00px;top:284.82px;font-size:6.3px;line-height:7.56px;color:#2b2b2b;transform:scaleX(0.950);transform-origin:0 0;">full_adder_tb</span>
<span style="left:110.50px;top:284.82px;font-size:6.3px;line-height:7.56px;color:#2b2b2b;transform:scaleX(0.950);transform-origin:0 0;">full_adder_tb</span>
<span style="left:149.00px;top:284.82px;font-size:6.3px;line-height:7.56px;color:#2b2b2b;transform:scaleX(0.920);transform-origin:0 0;">Module</span>
<div style="left:41.8px;top:294.2px;width:6px;height:6px;background:#fdfdfd;border:0.6px solid #b4bcc8;border-radius:50%;"></div>
<div style="left:43.3px;top:296.8px;width:3px;height:0.8px;background:#334;"></div>
<div style="left:44.4px;top:295.7px;width:0.8px;height:3px;background:#334;"></div>
<div style="left:48px;top:296.9px;width:2.4px;height:0.6px;background:#9aa2ac;"></div>
<div style="left:44.5px;top:292.6px;width:0.6px;height:1.6px;background:#b8c0c8;"></div>
<svg style="left:50.8px;top:293.8px;" width="6.8" height="6.6" viewBox="0 0 6.8 6.6"><polygon points="0.4,1.6 4.8,1.6 4.8,6.2 0.4,6.2" fill="#1cb4ea"/><polygon points="0.4,1.6 1.8,0.4 6.4,0.4 4.8,1.6" fill="#8adcf8"/><polygon points="4.8,1.6 6.4,0.4 6.4,4.8 4.8,6.2" fill="#0a3c8c"/><rect x="0.4" y="5.6" width="4.6" height="0.8" fill="#0a3c8c"/></svg>
<span style="left:60.40px;top:293.62px;font-size:6.3px;line-height:7.56px;color:#2b2b2b;transform:scaleX(0.876);transform-origin:0 0;">m</span>
<span style="left:110.50px;top:293.62px;font-size:6.3px;line-height:7.56px;color:#2b2b2b;transform:scaleX(0.937);transform-origin:0 0;">ripple17</span>
<span style="left:149.00px;top:293.62px;font-size:6.3px;line-height:7.56px;color:#2b2b2b;transform:scaleX(0.920);transform-origin:0 0;">Module</span>
<svg style="left:39.4px;top:301.2px;" width="8.6" height="8.6" viewBox="0 0 8.6 8.6"><rect x="0.5" y="0.5" width="7.6" height="7.6" fill="#f4f8ff" stroke="#2a5ac8" stroke-width="0.9"/><path d="M1.4 6 L3.4 2.4 L5 4.4 L6.8 1.4" fill="none" stroke="#d02020" stroke-width="1"/><path d="M1 7.6 Q4.2 3.6 7.6 7.6 Z" fill="#20a0a0"/></svg>
<span style="left:52.00px;top:302.22px;font-size:6.3px;line-height:7.56px;color:#2b2b2b;transform:scaleX(0.954);transform-origin:0 0;">#vsim_capacity#</span>
<span style="left:149.00px;top:302.22px;font-size:6.3px;line-height:7.56px;color:#2b2b2b;transform:scaleX(0.922);transform-origin:0 0;">Capacity</span>
<div style="left:29.6px;top:526.4px;width:163.8px;height:7px;background:#f6f6f6;border:0.5px solid #e2e2e2;"></div>
<div style="left:29.6px;top:526.4px;width:7px;height:7px;background:#f0f0f0;border:0.5px solid #e4e4e4;border-right-color:#9a9a9a;border-bottom-color:#9a9a9a;"></div>
<div style="left:186.4px;top:526.4px;width:7px;height:7px;background:#f0f0f0;border:0.5px solid #e4e4e4;border-right-color:#9a9a9a;border-bottom-color:#9a9a9a;"></div>
<svg style="left:31.3px;top:527.6px;" width="3.4" height="4.6" viewBox="0 0 3.4 4.6"><polygon points="3.1,0.3 3.1,4.3 0.4,2.3" fill="#1a1a1a"/></svg>
<svg style="left:188.3px;top:527.6px;" width="3.4" height="4.6" viewBox="0 0 3.4 4.6"><polygon points="0.3,0.3 0.3,4.3 3,2.3" fill="#1a1a1a"/></svg>
<div style="left:37.5px;top:526.4px;width:77.5px;height:7px;background:#f0f0f0;border:0.5px solid #e4e4e4;border-right-color:#8a8a8a;border-bottom-color:#8a8a8a;"></div>
<div style="left:28px;top:535.6px;width:118px;height:12px;background:#f0f0f0;"></div>
<div style="left:145px;top:536px;width:36px;height:12.4px;background:#f5f5f5;border-top:0.8px solid #6a6a6a;"></div>
<div style="left:28.8px;top:536px;width:40.4px;height:11px;background:#d6d6d6;border:0.7px solid #6a6a6a;border-top:1px solid #3c3c3c;border-bottom-color:#8c8c8c;border-radius:0 0 2px 2px;"></div>
<div style="left:69.2px;top:536px;width:42.8px;height:11px;background:#d6d6d6;border:0.7px solid #6a6a6a;border-top:1px solid #3c3c3c;border-bottom-color:#8c8c8c;border-radius:0 0 2px 2px;"></div>
<div style="left:112px;top:535px;width:33px;height:12.4px;background:#ffffff;border:0.6px solid #8a8a8a;border-top:none;border-radius:0 0 2px 2px;"></div>
<svg style="left:31.4px;top:537.2px;" width="7" height="8.4" viewBox="0 0 7 8.4"><rect x="0.6" y="2" width="1.8" height="6" fill="#2a6a2a"/><rect x="2.6" y="0.6" width="1.8" height="7.4" fill="#223a80"/><rect x="4.6" y="2.6" width="1.8" height="5.4" fill="#7a5a10"/></svg>
<span style="left:40.60px;top:538.42px;font-size:6.3px;line-height:7.56px;color:#2b2b2b;transform:scaleX(0.935);transform-origin:0 0;">Library</span>
<span style="left:63.00px;top:538.40px;font-size:6px;line-height:7.2px;color:#a8a8a8;">×</span>
<div style="left:73.6px;top:538.1px;width:7.6px;height:6.6px;background:#e8ecf8;border:0.7px solid #334;"></div>
<div style="left:75.4px;top:539.8px;width:1.2px;height:1.2px;background:#2a3ab0;"></div>
<div style="left:78.2px;top:539.8px;width:1.2px;height:1.2px;background:#2a3ab0;"></div>
<span style="left:82.80px;top:538.42px;font-size:6.3px;line-height:7.56px;color:#2b2b2b;transform:scaleX(0.949);transform-origin:0 0;">Project</span>
<span style="left:106.00px;top:538.40px;font-size:6px;line-height:7.2px;color:#a8a8a8;">×</span>
<svg style="left:114.4px;top:536.6px;" width="9" height="10" viewBox="0 0 9 10"><path d="M2 7 L2.6 1.2 H7.6 L7.2 7" fill="#f4f6fc" stroke="#4a5a80" stroke-width="0.7"/><path d="M4.2 1.4 L3.8 6.4 M5.8 1.4 L5.6 6.4" stroke="#8a9ac8" stroke-width="0.7"/><path d="M1.8 7.8 H7" stroke="#5a0a0a" stroke-width="0.8"/><circle cx="1.8" cy="7.8" r="1.6" fill="#6a0a12"/><circle cx="7" cy="7.8" r="1.6" fill="#6a0a12"/></svg>
<span style="left:125.40px;top:538.42px;font-size:6.3px;line-height:7.56px;color:#2b2b2b;transform:scaleX(0.857);transform-origin:0 0;">sim</span>
<span style="left:138.40px;top:538.40px;font-size:6px;line-height:7.2px;color:#a8a8a8;">×</span>
<div style="left:181.6px;top:536.4px;width:5.8px;height:9.6px;background:#f0f0f0;border:0.5px solid #c0c0c0;"></div>
<div style="left:187.4px;top:536.4px;width:5.8px;height:9.6px;background:#f0f0f0;border:0.5px solid #c0c0c0;"></div>
<svg style="left:182.8px;top:539px;" width="3.2" height="4.4" viewBox="0 0 3.2 4.4"><polygon points="2.9,0.3 2.9,4.1 0.4,2.2" fill="#222"/></svg>
<svg style="left:188.8px;top:539px;" width="3.2" height="4.4" viewBox="0 0 3.2 4.4"><polygon points="0.3,0.3 0.3,4.1 2.8,2.2" fill="#222"/></svg>
<div style="left:193.6px;top:261px;width:3.8px;height:287px;background:linear-gradient(90deg,#d4d4d4,#e6e6e6 60%,#f0f0f0);"></div>
<svg style="left:199.4px;top:262.4px;" width="9" height="9.6" viewBox="0 0 9 9.6"><polygon points="4.5,0.6 8.4,2.8 4.5,5 0.6,2.8" fill="#d02a8a"/><polygon points="0.6,3.4 4.3,5.6 4.3,9 0.6,6.8" fill="#2a7ae0"/><polygon points="8.4,3.4 4.7,5.6 4.7,9 8.4,6.8" fill="#1aa03a"/></svg>
<span style="left:210.00px;top:264.42px;font-size:6.3px;line-height:7.56px;color:#2b2b2b;transform:scaleX(0.927);transform-origin:0 0;">Objects</span>
<div style="left:233px;top:265.7px;width:91px;height:0.7px;background:#a6a6a6;"></div>
<div style="left:233px;top:268px;width:91px;height:0.7px;background:#a6a6a6;"></div>
<div style="left:275px;top:265px;width:8px;height:4.4px;background:#f0f0f0;"></div>
<span style="left:275.50px;top:264.64px;font-size:4.6px;line-height:5.52px;color:#9a9a9a;transform:scaleX(1.370);transform-origin:0 0;">::::</span>
<div style="left:325.9px;top:263.4px;width:7.4px;height:7.6px;background:#f6f6f6;border:0.5px solid #dcdcdc;"></div>
<div style="left:333.9px;top:263.4px;width:7.4px;height:7.6px;background:#f6f6f6;border:0.5px solid #dcdcdc;"></div>
<div style="left:341.9px;top:263.4px;width:7.4px;height:7.6px;background:#f6f6f6;border:0.5px solid #dcdcdc;"></div>
<svg style="left:326.1px;top:263.8px;" width="6.8" height="6.8" viewBox="0 0 6.8 6.8"><path d="M2.8 1 V5.8 M0.4 3.4 H5.2" stroke="#222" stroke-width="1"/><path d="M5.9 0.8 V6" stroke="#222" stroke-width="0.6"/></svg>
<svg style="left:334.1px;top:263.8px;" width="6.8" height="6.8" viewBox="0 0 6.8 6.8"><rect x="1" y="3" width="3" height="3" fill="none" stroke="#222" stroke-width="0.8"/><path d="M3.2 1.2 H5.8 V4 M5.8 1.2 L3.6 3.4" fill="none" stroke="#222" stroke-width="0.9"/></svg>
<svg style="left:342.1px;top:263.8px;" width="6.8" height="6.8" viewBox="0 0 6.8 6.8"><path d="M1.2 1.4 L5.6 5.6 M5.6 1.4 L1.2 5.6" stroke="#222" stroke-width="0.95"/></svg>
<div style="left:198.8px;top:272.6px;width:150.8px;height:9.2px;background:#f3f3f3;border-top:0.6px solid #c8c8c8;"></div>
<svg style="left:199.4px;top:275px;" width="4.2" height="4.6" viewBox="0 0 4.2 4.6"><polygon points="0.2,0.4 4,0.4 2.1,4.2" fill="#222"/></svg>
<div style="left:203.4px;top:273.4px;width:0.8px;height:8.6px;background:#c0c0c0;"></div>
<span style="left:205.60px;top:275.02px;font-size:6.3px;line-height:7.56px;color:#2b2b2b;transform:scaleX(0.833);transform-origin:0 0;">Name</span>
<svg style="left:274px;top:275.8px;" width="3.4" height="3.4" viewBox="0 0 3.4 3.4"><polygon points="1.7,0.4 3.2,3 0.2,3" fill="none" stroke="#999" stroke-width="0.4"/></svg>
<div style="left:279.1px;top:273.4px;width:0.8px;height:8.6px;background:#b4b4b4;"></div>
<span style="left:281.00px;top:275.02px;font-size:6.3px;line-height:7.56px;color:#2b2b2b;transform:scaleX(0.793);transform-origin:0 0;">Value</span>
<div style="left:293.4px;top:273.2px;width:56.2px;height:9.2px;background:#f0f0f0;"></div>
<div style="left:293.6px;top:273.6px;width:6.4px;height:8.4px;background:#f4f4f4;border:0.5px solid #aaa;"></div>
<span style="left:295.00px;top:275.96px;font-size:4.4px;line-height:5.28px;color:#334;">H</span>
<div style="left:300.4px;top:273.4px;width:35px;height:8.2px;background:#eef6ee;"></div>
<div style="left:304.8px;top:275.8px;width:4px;height:4px;background:#1a9a2a;border-radius:50%;border:0.5px solid #0a6a1a;"></div>
<span style="left:311.60px;top:274.00px;font-size:7px;line-height:8.4px;color:#444;font-family:'Liberation Mono', monospace;-webkit-text-stroke:0.05px;transform:scaleX(0.912);transform-origin:0 0;">173 ns</span>
<div style="left:335.6px;top:273.6px;width:6.4px;height:8.4px;background:#f4f4f4;border:0.5px solid #aaa;"></div>
<span style="left:337.00px;top:275.96px;font-size:4.4px;line-height:5.28px;color:#334;">H</span>
<svg style="left:345.6px;top:274.2px;" width="4" height="7" viewBox="0 0 4 7"><polygon points="0.3,0.4 3.8,3.5 0.3,6.6" fill="#111"/></svg>
<div style="left:198.8px;top:281.8px;width:150.8px;height:109.8px;background:#4e5b8b;"></div>
<svg style="left:202.1px;top:284.6px;" width="5.8" height="5.8" viewBox="0 0 5.8 5.8"><rect x="0.2" y="0.2" width="5.4" height="5.4" fill="#ffffff"/><path d="M1.3 2.9 H4.5 M2.9 1.3 V4.5" stroke="#1c2030" stroke-width="1"/></svg>
<div style="left:207.6px;top:287.2px;width:2.8px;height:0.6px;background:#c8d0e8;"></div>
<svg style="left:210.1px;top:283.6px;" width="7.8" height="7.8" viewBox="0 0 7.8 7.8"><polygon points="3.9,0.2 7.6,3.9 3.9,7.6 0.2,3.9" fill="#26bcf0"/><polygon points="3.9,0.2 5.8,2.1 2.1,5.8 0.2,3.9" fill="#7fe0fc"/><polygon points="3.9,1.8 4.8,2.7 2.7,4.8 1.8,3.9" fill="#b4eeff"/><polygon points="7.6,3.9 3.9,7.6 2.6,6.3 6.3,2.6" fill="#1468c8"/></svg>
<span style="left:220.80px;top:284.32px;font-size:6.3px;line-height:7.56px;color:#eef0f8;transform:scaleX(0.904);transform-origin:0 0;">A</span>
<span style="left:280.60px;top:284.32px;font-size:6.3px;line-height:7.56px;color:#eef0f8;transform:scaleX(0.952);transform-origin:0 0;">-No Data-</span>
<span style="left:318.00px;top:284.32px;font-size:6.3px;line-height:7.56px;color:#eef0f8;transform:scaleX(0.914);transform-origin:0 0;">Pack...</span>
<span style="left:339.20px;top:284.32px;font-size:6.3px;line-height:7.56px;color:#eef0f8;transform:scaleX(0.970);transform-origin:0 0;clip-path:inset(0 0.6px 0 0);">Inte</span>
<svg style="left:202.1px;top:293.3px;" width="5.8" height="5.8" viewBox="0 0 5.8 5.8"><rect x="0.2" y="0.2" width="5.4" height="5.4" fill="#ffffff"/><path d="M1.3 2.9 H4.5 M2.9 1.3 V4.5" stroke="#1c2030" stroke-width="1"/></svg>
<div style="left:207.6px;top:295.9px;width:2.8px;height:0.6px;background:#c8d0e8;"></div>
<svg style="left:210.1px;top:292.3px;" width="7.8" height="7.8" viewBox="0 0 7.8 7.8"><polygon points="3.9,0.2 7.6,3.9 3.9,7.6 0.2,3.9" fill="#26bcf0"/><polygon points="3.9,0.2 5.8,2.1 2.1,5.8 0.2,3.9" fill="#7fe0fc"/><polygon points="3.9,1.8 4.8,2.7 2.7,4.8 1.8,3.9" fill="#b4eeff"/><polygon points="7.6,3.9 3.9,7.6 2.6,6.3 6.3,2.6" fill="#1468c8"/></svg>
<span style="left:220.80px;top:293.02px;font-size:6.3px;line-height:7.56px;color:#eef0f8;transform:scaleX(0.857);transform-origin:0 0;">B</span>
<span style="left:280.60px;top:293.02px;font-size:6.3px;line-height:7.56px;color:#eef0f8;transform:scaleX(0.952);transform-origin:0 0;">-No Data-</span>
<span style="left:318.00px;top:293.02px;font-size:6.3px;line-height:7.56px;color:#eef0f8;transform:scaleX(0.914);transform-origin:0 0;">Pack...</span>
<span style="left:339.20px;top:293.02px;font-size:6.3px;line-height:7.56px;color:#eef0f8;transform:scaleX(0.970);transform-origin:0 0;clip-path:inset(0 0.6px 0 0);">Inte</span>
<svg style="left:210.1px;top:301.1px;" width="7.8" height="7.8" viewBox="0 0 7.8 7.8"><polygon points="3.9,0.2 7.6,3.9 3.9,7.6 0.2,3.9" fill="#26bcf0"/><polygon points="3.9,0.2 5.8,2.1 2.1,5.8 0.2,3.9" fill="#7fe0fc"/><polygon points="3.9,1.8 4.8,2.7 2.7,4.8 1.8,3.9" fill="#b4eeff"/><polygon points="7.6,3.9 3.9,7.6 2.6,6.3 6.3,2.6" fill="#1468c8"/></svg>
<span style="left:220.80px;top:301.82px;font-size:6.3px;line-height:7.56px;color:#eef0f8;transform:scaleX(0.867);transform-origin:0 0;">Cin</span>
<span style="left:280.60px;top:301.82px;font-size:6.3px;line-height:7.56px;color:#eef0f8;transform:scaleX(0.934);transform-origin:0 0;">Not Logged</span>
<span style="left:318.00px;top:301.82px;font-size:6.3px;line-height:7.56px;color:#eef0f8;transform:scaleX(0.857);transform-origin:0 0;">Regi...</span>
<span style="left:339.20px;top:301.82px;font-size:6.3px;line-height:7.56px;color:#eef0f8;transform:scaleX(0.970);transform-origin:0 0;clip-path:inset(0 0.6px 0 0);">Inte</span>
<svg style="left:210.1px;top:310px;" width="7.8" height="7.8" viewBox="0 0 7.8 7.8"><polygon points="3.9,0.2 7.6,3.9 3.9,7.6 0.2,3.9" fill="#26bcf0"/><polygon points="3.9,0.2 5.8,2.1 2.1,5.8 0.2,3.9" fill="#7fe0fc"/><polygon points="3.9,1.8 4.8,2.7 2.7,4.8 1.8,3.9" fill="#b4eeff"/><polygon points="7.6,3.9 3.9,7.6 2.6,6.3 6.3,2.6" fill="#1468c8"/></svg>
<span style="left:220.80px;top:310.72px;font-size:6.3px;line-height:7.56px;color:#eef0f8;transform:scaleX(0.928);transform-origin:0 0;">Cout_</span>
<span style="left:280.60px;top:310.72px;font-size:6.3px;line-height:7.56px;color:#eef0f8;transform:scaleX(0.934);transform-origin:0 0;">Not Logged</span>
<span style="left:318.00px;top:310.72px;font-size:6.3px;line-height:7.56px;color:#eef0f8;transform:scaleX(0.876);transform-origin:0 0;">Net</span>
<span style="left:339.20px;top:310.72px;font-size:6.3px;line-height:7.56px;color:#eef0f8;transform:scaleX(0.970);transform-origin:0 0;clip-path:inset(0 0.6px 0 0);">Inte</span>
<svg style="left:202.1px;top:319.8px;" width="5.8" height="5.8" viewBox="0 0 5.8 5.8"><rect x="0.2" y="0.2" width="5.4" height="5.4" fill="#ffffff"/><path d="M1.3 2.9 H4.5 M2.9 1.3 V4.5" stroke="#1c2030" stroke-width="1"/></svg>
<div style="left:207.6px;top:322.4px;width:2.8px;height:0.6px;background:#c8d0e8;"></div>
<svg style="left:210.1px;top:318.8px;" width="7.8" height="7.8" viewBox="0 0 7.8 7.8"><polygon points="3.9,0.2 7.6,3.9 3.9,7.6 0.2,3.9" fill="#26bcf0"/><polygon points="3.9,0.2 5.8,2.1 2.1,5.8 0.2,3.9" fill="#7fe0fc"/><polygon points="3.9,1.8 4.8,2.7 2.7,4.8 1.8,3.9" fill="#b4eeff"/><polygon points="7.6,3.9 3.9,7.6 2.6,6.3 6.3,2.6" fill="#1468c8"/></svg>
<span style="left:220.80px;top:319.52px;font-size:6.3px;line-height:7.56px;color:#eef0f8;transform:scaleX(0.818);transform-origin:0 0;">Sum</span>
<span style="left:280.60px;top:319.52px;font-size:6.3px;line-height:7.56px;color:#eef0f8;transform:scaleX(0.952);transform-origin:0 0;">-No Data-</span>
<span style="left:318.00px;top:319.52px;font-size:6.3px;line-height:7.56px;color:#eef0f8;transform:scaleX(0.876);transform-origin:0 0;">Net</span>
<span style="left:339.20px;top:319.52px;font-size:6.3px;line-height:7.56px;color:#eef0f8;transform:scaleX(0.970);transform-origin:0 0;clip-path:inset(0 0.6px 0 0);">Inte</span>
<svg style="left:210.1px;top:327.7px;" width="7.8" height="7.8" viewBox="0 0 7.8 7.8"><polygon points="3.9,0.2 7.6,3.9 3.9,7.6 0.2,3.9" fill="#26bcf0"/><polygon points="3.9,0.2 5.8,2.1 2.1,5.8 0.2,3.9" fill="#7fe0fc"/><polygon points="3.9,1.8 4.8,2.7 2.7,4.8 1.8,3.9" fill="#b4eeff"/><polygon points="7.6,3.9 3.9,7.6 2.6,6.3 6.3,2.6" fill="#1468c8"/></svg>
<span style="left:220.80px;top:328.42px;font-size:6.3px;line-height:7.56px;color:#eef0f8;transform:scaleX(0.874);transform-origin:0 0;">of</span>
<span style="left:280.60px;top:328.42px;font-size:6.3px;line-height:7.56px;color:#eef0f8;transform:scaleX(0.934);transform-origin:0 0;">Not Logged</span>
<span style="left:318.00px;top:328.42px;font-size:6.3px;line-height:7.56px;color:#eef0f8;transform:scaleX(0.876);transform-origin:0 0;">Net</span>
<span style="left:339.20px;top:328.42px;font-size:6.3px;line-height:7.56px;color:#eef0f8;transform:scaleX(0.970);transform-origin:0 0;clip-path:inset(0 0.6px 0 0);">Inte</span>
<div style="left:349.6px;top:261px;width:6.4px;height:287px;background:#f0f0f0;"></div>
<div style="left:349.8px;top:261px;width:3.8px;height:287px;background:linear-gradient(90deg,#d4d4d4,#e6e6e6 60%,#f0f0f0);"></div>
<div style="left:198.8px;top:393px;width:150.8px;height:9px;background:#f6f6f6;border:0.5px solid #e2e2e2;"></div>
<div style="left:198.8px;top:393px;width:9px;height:9px;background:#f0f0f0;border:0.5px solid #e4e4e4;border-right-color:#9a9a9a;border-bottom-color:#9a9a9a;"></div>
<div style="left:340.6px;top:393px;width:9px;height:9px;background:#f0f0f0;border:0.5px solid #e4e4e4;border-right-color:#9a9a9a;border-bottom-color:#9a9a9a;"></div>
<svg style="left:201.5px;top:395.2px;" width="3.4" height="4.6" viewBox="0 0 3.4 4.6"><polygon points="3.1,0.3 3.1,4.3 0.4,2.3" fill="#1a1a1a"/></svg>
<svg style="left:343.5px;top:395.2px;" width="3.4" height="4.6" viewBox="0 0 3.4 4.6"><polygon points="0.3,0.3 0.3,4.3 3,2.3" fill="#1a1a1a"/></svg>
<div style="left:207.6px;top:393px;width:121.4px;height:9px;background:#f0f0f0;border:0.5px solid #e4e4e4;border-right-color:#8a8a8a;border-bottom-color:#8a8a8a;"></div>
<div style="left:329px;top:393px;width:11.6px;height:9px;background:#f8f8f8;"></div>
<div style="left:197.6px;top:403.4px;width:152.4px;height:1.4px;background:#cfcfcf;"></div>
<svg style="left:199.2px;top:408px;" width="8.4" height="8.8" viewBox="0 0 8.4 8.8"><circle cx="4.2" cy="4.4" r="3.3" fill="#6a9ad4" stroke="#3a6aa8" stroke-width="1.6" stroke-dasharray="1.5 0.7"/><circle cx="4.2" cy="4.4" r="2.2" fill="#8ab8e8"/><circle cx="4.2" cy="4.4" r="1" fill="#e8f2ff"/></svg>
<span style="left:210.00px;top:408.82px;font-size:6.3px;line-height:7.56px;color:#2b2b2b;transform:scaleX(0.933);transform-origin:0 0;">Processes (Active)</span>
<div style="left:262px;top:411.1px;width:62px;height:0.7px;background:#a6a6a6;"></div>
<div style="left:262px;top:413.4px;width:62px;height:0.7px;background:#a6a6a6;"></div>
<div style="left:289px;top:410.4px;width:8px;height:4.4px;background:#f0f0f0;"></div>
<span style="left:289.50px;top:410.04px;font-size:4.6px;line-height:5.52px;color:#9a9a9a;transform:scaleX(1.370);transform-origin:0 0;">::::</span>
<div style="left:325.9px;top:408.8px;width:7.4px;height:7.6px;background:#f6f6f6;border:0.5px solid #dcdcdc;"></div>
<div style="left:333.9px;top:408.8px;width:7.4px;height:7.6px;background:#f6f6f6;border:0.5px solid #dcdcdc;"></div>
<div style="left:341.9px;top:408.8px;width:7.4px;height:7.6px;background:#f6f6f6;border:0.5px solid #dcdcdc;"></div>
<svg style="left:326.1px;top:409.2px;" width="6.8" height="6.8" viewBox="0 0 6.8 6.8"><path d="M2.8 1 V5.8 M0.4 3.4 H5.2" stroke="#222" stroke-width="1"/><path d="M5.9 0.8 V6" stroke="#222" stroke-width="0.6"/></svg>
<svg style="left:334.1px;top:409.2px;" width="6.8" height="6.8" viewBox="0 0 6.8 6.8"><rect x="1" y="3" width="3" height="3" fill="none" stroke="#222" stroke-width="0.8"/><path d="M3.2 1.2 H5.8 V4 M5.8 1.2 L3.6 3.4" fill="none" stroke="#222" stroke-width="0.9"/></svg>
<svg style="left:342.1px;top:409.2px;" width="6.8" height="6.8" viewBox="0 0 6.8 6.8"><path d="M1.2 1.4 L5.6 5.6 M5.6 1.4 L1.2 5.6" stroke="#222" stroke-width="0.95"/></svg>
<div style="left:198.8px;top:417.4px;width:150.8px;height:10px;background:#f3f3f3;border-top:0.6px solid #c8c8c8;"></div>
<svg style="left:199.4px;top:420px;" width="4.2" height="4.6" viewBox="0 0 4.2 4.6"><polygon points="0.2,0.4 4,0.4 2.1,4.2" fill="#222"/></svg>
<div style="left:203.4px;top:418px;width:0.8px;height:9px;background:#c0c0c0;"></div>
<span style="left:205.60px;top:419.12px;font-size:6.3px;line-height:7.56px;color:#2b2b2b;transform:scaleX(0.833);transform-origin:0 0;">Name</span>
<div style="left:279.1px;top:418px;width:0.8px;height:9px;background:#b4b4b4;"></div>
<span style="left:281.00px;top:419.12px;font-size:6.3px;line-height:7.56px;color:#2b2b2b;transform:scaleX(0.977);transform-origin:0 0;">Type (filtered)</span>
<div style="left:336.2px;top:418px;width:0.8px;height:9px;background:#b4b4b4;"></div>
<span style="left:338.00px;top:419.42px;font-size:6.3px;line-height:7.56px;color:#2b2b2b;">:</span>
<div style="left:198.8px;top:427.4px;width:140.8px;height:109px;background:#86a2f7;"></div>
<div style="left:341px;top:417.8px;width:8.4px;height:118.6px;background:#f6f6f6;border:0.5px solid #e4e4e4;"></div>
<div style="left:341px;top:417.8px;width:8.4px;height:8.4px;background:#f0f0f0;border:0.5px solid #e4e4e4;border-right-color:#9a9a9a;border-bottom-color:#9a9a9a;"></div>
<div style="left:341px;top:528px;width:8.4px;height:8.4px;background:#f0f0f0;border:0.5px solid #e4e4e4;border-right-color:#9a9a9a;border-bottom-color:#9a9a9a;"></div>
<svg style="left:342.9px;top:420.3px;" width="4.6" height="3.2" viewBox="0 0 4.6 3.2"><polygon points="0.3,2.9 4.3,2.9 2.3,0.3" fill="#8c8c8c"/></svg>
<svg style="left:342.9px;top:530.7px;" width="4.6" height="3.2" viewBox="0 0 4.6 3.2"><polygon points="0.3,0.3 4.3,0.3 2.3,2.9" fill="#8c8c8c"/></svg>
<div style="left:341px;top:427px;width:8.4px;height:101px;background:#f8f8f8;"></div>
<div style="left:198.8px;top:537.4px;width:141.2px;height:8.6px;background:#f6f6f6;border:0.5px solid #e2e2e2;"></div>
<div style="left:198.8px;top:537.4px;width:8.6px;height:8.6px;background:#f0f0f0;border:0.5px solid #e4e4e4;border-right-color:#9a9a9a;border-bottom-color:#9a9a9a;"></div>
<div style="left:331.4px;top:537.4px;width:8.6px;height:8.6px;background:#f0f0f0;border:0.5px solid #e4e4e4;border-right-color:#9a9a9a;border-bottom-color:#9a9a9a;"></div>
<svg style="left:201.3px;top:539.4px;" width="3.4" height="4.6" viewBox="0 0 3.4 4.6"><polygon points="3.1,0.3 3.1,4.3 0.4,2.3" fill="#1a1a1a"/></svg>
<svg style="left:334.1px;top:539.4px;" width="3.4" height="4.6" viewBox="0 0 3.4 4.6"><polygon points="0.3,0.3 0.3,4.3 3,2.3" fill="#1a1a1a"/></svg>
<div style="left:207.6px;top:537.4px;width:41.8px;height:8.6px;background:#f0f0f0;border:0.5px solid #e4e4e4;border-right-color:#8a8a8a;border-bottom-color:#8a8a8a;"></div>
<div style="left:356.8px;top:261.6px;width:513.2px;height:11px;background:linear-gradient(180deg,#c6d8ec 0,#a9c4e0 25%,#a9c4e0 80%,#b8cee6 100%);"></div>
<div style="left:357.3px;top:264.4px;width:6.6px;height:6px;background:#0a2a1a;border:0.6px solid #111;"></div>
<div style="left:358.6px;top:265.6px;width:4px;height:0.8px;background:#2ad06a;"></div>
<div style="left:360px;top:267.2px;width:1px;height:2.4px;background:#2ad06a;"></div>
<span style="left:367.30px;top:264.42px;font-size:6.3px;line-height:7.56px;color:#1c2c44;transform:scaleX(0.961);transform-origin:0 0;">Wave - Default</span>
<div style="left:410px;top:264.9px;width:434px;height:1px;background:#cfe0f2;"></div>
<div style="left:410px;top:265.9px;width:434px;height:1px;background:#2c4a68;"></div>
<div style="left:410px;top:268px;width:434px;height:1px;background:#cfe0f2;"></div>
<div style="left:410px;top:269px;width:434px;height:1px;background:#2c4a68;"></div>
<div style="left:621.5px;top:264.2px;width:12px;height:6.4px;background:#a9c4e0;"></div>
<span style="left:623.50px;top:264.84px;font-size:4.6px;line-height:5.52px;color:#6d88ac;transform:scaleX(1.566);transform-origin:0 0;">::::</span>
<div style="left:844px;top:264.6px;width:0.8px;height:5.8px;background:#2c4a68;"></div>
<div style="left:845.8px;top:263.4px;width:7.4px;height:7.6px;background:#f6f6f6;border:0.5px solid #dcdcdc;"></div>
<div style="left:853.8px;top:263.4px;width:7.4px;height:7.6px;background:#f6f6f6;border:0.5px solid #dcdcdc;"></div>
<div style="left:861.8px;top:263.4px;width:7.4px;height:7.6px;background:#f6f6f6;border:0.5px solid #dcdcdc;"></div>
<svg style="left:846px;top:263.8px;" width="6.8" height="6.8" viewBox="0 0 6.8 6.8"><path d="M2.8 1 V5.8 M0.4 3.4 H5.2" stroke="#111" stroke-width="1"/><path d="M5.9 0.8 V6" stroke="#111" stroke-width="0.6"/></svg>
<svg style="left:854px;top:263.8px;" width="6.8" height="6.8" viewBox="0 0 6.8 6.8"><rect x="1" y="3" width="3" height="3" fill="none" stroke="#111" stroke-width="0.8"/><path d="M3.2 1.2 H5.8 V4 M5.8 1.2 L3.6 3.4" fill="none" stroke="#111" stroke-width="0.9"/></svg>
<svg style="left:862px;top:263.8px;" width="6.8" height="6.8" viewBox="0 0 6.8 6.8"><path d="M1.2 1.4 L5.6 5.6 M5.6 1.4 L1.2 5.6" stroke="#111" stroke-width="0.95"/></svg>
<div style="left:355.6px;top:272.8px;width:514.4px;height:260.2px;background:#ffffff;"></div>
<div style="left:356.8px;top:272.6px;width:86.8px;height:11.6px;background:#808080;"></div>
<div style="left:446.2px;top:272.6px;width:53.8px;height:11.6px;background:#808080;"></div>
<div style="left:502.2px;top:272.6px;width:355.6px;height:11.6px;background:#000;"></div>
<div style="left:361.5px;top:285.6px;width:82.1px;height:212.4px;background:#808080;"></div>
<div style="left:446.2px;top:285.6px;width:53.8px;height:212.4px;background:#808080;"></div>
<div style="left:502.2px;top:285.6px;width:355.6px;height:212.4px;background:#000;"></div>
<div style="left:355.6px;top:285px;width:1.2px;height:248px;background:#f0f0f0;"></div>
<svg style="left:361.6px;top:274px;" width="8.4" height="9" viewBox="0 0 8.4 9"><polygon points="4.2,0.6 7.8,2.6 4.2,4.6 0.6,2.6" fill="#d02a8a"/><polygon points="0.6,3.2 4,5.2 4,8.4 0.6,6.4" fill="#2a7ae0"/><polygon points="7.8,3.2 4.4,5.2 4.4,8.4 7.8,6.4" fill="#1aa03a"/></svg>
<svg style="left:372.7px;top:278.75px;" width="2.2" height="1.3" viewBox="0 0 2.2 1.3"><polygon points="0,0 2.2,0 1.1,1.3" fill="#222"/></svg>
<span style="left:484.40px;top:275.82px;font-size:6.3px;line-height:7.56px;color:#e8e8e8;transform:scaleX(0.891);transform-origin:0 0;">Msgs</span>
<svg style="left:363.1px;top:287.7px;" width="5.8" height="5.8" viewBox="0 0 5.8 5.8"><rect x="0.2" y="0.2" width="5.4" height="5.4" fill="#f4f4f4"/><path d="M1.3 2.9 H4.5 M2.9 1.3 V4.5" stroke="#222" stroke-width="1"/></svg>
<div style="left:368.4px;top:290.35px;width:3.2px;height:0.5px;background:#ddd;"></div>
<svg style="left:372.388px;top:286.388px;" width="8.424" height="8.424" viewBox="0 0 7.8 7.8"><polygon points="3.9,0.2 7.6,3.9 3.9,7.6 0.2,3.9" fill="#26bcf0"/><polygon points="3.9,0.2 5.8,2.1 2.1,5.8 0.2,3.9" fill="#7fe0fc"/><polygon points="3.9,1.8 4.8,2.7 2.7,4.8 1.8,3.9" fill="#b4eeff"/><polygon points="7.6,3.9 3.9,7.6 2.6,6.3 6.3,2.6" fill="#1468c8"/></svg>
<span style="left:383.40px;top:287.42px;font-size:6.3px;line-height:7.56px;color:#efefef;transform:scaleX(0.975);transform-origin:0 0;">/full_adder_tb/A</span>
<span style="left:447.30px;top:287.42px;font-size:6.3px;line-height:7.56px;color:#efefef;transform:scaleX(0.898);transform-origin:0 0;">-No Data-</span>
<svg style="left:363.1px;top:297px;" width="5.8" height="5.8" viewBox="0 0 5.8 5.8"><rect x="0.2" y="0.2" width="5.4" height="5.4" fill="#f4f4f4"/><path d="M1.3 2.9 H4.5 M2.9 1.3 V4.5" stroke="#222" stroke-width="1"/></svg>
<div style="left:368.4px;top:299.65px;width:3.2px;height:0.5px;background:#ddd;"></div>
<svg style="left:372.388px;top:295.688px;" width="8.424" height="8.424" viewBox="0 0 7.8 7.8"><polygon points="3.9,0.2 7.6,3.9 3.9,7.6 0.2,3.9" fill="#26bcf0"/><polygon points="3.9,0.2 5.8,2.1 2.1,5.8 0.2,3.9" fill="#7fe0fc"/><polygon points="3.9,1.8 4.8,2.7 2.7,4.8 1.8,3.9" fill="#b4eeff"/><polygon points="7.6,3.9 3.9,7.6 2.6,6.3 6.3,2.6" fill="#1468c8"/></svg>
<span style="left:383.40px;top:296.72px;font-size:6.3px;line-height:7.56px;color:#efefef;transform:scaleX(0.975);transform-origin:0 0;">/full_adder_tb/B</span>
<span style="left:447.30px;top:296.72px;font-size:6.3px;line-height:7.56px;color:#efefef;transform:scaleX(0.898);transform-origin:0 0;">-No Data-</span>
<svg style="left:363.1px;top:306.4px;" width="5.8" height="5.8" viewBox="0 0 5.8 5.8"><rect x="0.2" y="0.2" width="5.4" height="5.4" fill="#f4f4f4"/><path d="M1.3 2.9 H4.5 M2.9 1.3 V4.5" stroke="#222" stroke-width="1"/></svg>
<div style="left:368.4px;top:309.05px;width:3.2px;height:0.5px;background:#ddd;"></div>
<svg style="left:372.388px;top:305.088px;" width="8.424" height="8.424" viewBox="0 0 7.8 7.8"><polygon points="3.9,0.2 7.6,3.9 3.9,7.6 0.2,3.9" fill="#26bcf0"/><polygon points="3.9,0.2 5.8,2.1 2.1,5.8 0.2,3.9" fill="#7fe0fc"/><polygon points="3.9,1.8 4.8,2.7 2.7,4.8 1.8,3.9" fill="#b4eeff"/><polygon points="7.6,3.9 3.9,7.6 2.6,6.3 6.3,2.6" fill="#1468c8"/></svg>
<span style="left:383.40px;top:306.12px;font-size:6.3px;line-height:7.56px;color:#efefef;transform:scaleX(0.946);transform-origin:0 0;">/full_adder_tb/Sum</span>
<span style="left:447.30px;top:306.12px;font-size:6.3px;line-height:7.56px;color:#efefef;transform:scaleX(0.898);transform-origin:0 0;">-No Data-</span>
<div style="left:362px;top:314px;width:79.6px;height:0.7px;background:#3a3a3a;"></div>
<div style="left:447px;top:314px;width:51px;height:0.7px;background:#3a3a3a;"></div>
<div style="left:538.37px;top:285.6px;width:0.9px;height:212.4px;background:#5c5c5c;"></div>
<div style="left:573.59px;top:285.6px;width:0.9px;height:212.4px;background:#5c5c5c;"></div>
<div style="left:608.81px;top:285.6px;width:0.9px;height:212.4px;background:#5c5c5c;"></div>
<div style="left:644.03px;top:285.6px;width:0.9px;height:212.4px;background:#5c5c5c;"></div>
<div style="left:679.25px;top:285.6px;width:0.9px;height:212.4px;background:#5c5c5c;"></div>
<div style="left:714.47px;top:285.6px;width:0.9px;height:212.4px;background:#5c5c5c;"></div>
<div style="left:749.69px;top:285.6px;width:0.9px;height:212.4px;background:#5c5c5c;"></div>
<div style="left:784.91px;top:285.6px;width:0.9px;height:212.4px;background:#5c5c5c;"></div>
<div style="left:820.13px;top:285.6px;width:0.9px;height:212.4px;background:#5c5c5c;"></div>
<div style="left:503.8px;top:290.5px;width:2.6px;height:0.7px;background:#c02020;"></div>
<svg style="left:506px;top:287.2px;" width="33" height="7.2" viewBox="0 0 33 7.2"><path d="M1.6 0.4 H33 M1.6 6.8 H33 M1.6 0.4 L0.4 2 V5.2 L1.6 6.8" fill="none" stroke="#6fae7c" stroke-width="0.7"/></svg>
<span style="left:509.80px;top:288.14px;font-size:5.6px;line-height:6.72px;color:#f2f2f2;transform:scaleX(1.034);transform-origin:0 0;">16&#x27;d810</span>
<div style="left:503.8px;top:299.8px;width:2.6px;height:0.7px;background:#c02020;"></div>
<svg style="left:506px;top:296.5px;" width="33" height="7.2" viewBox="0 0 33 7.2"><path d="M1.6 0.4 H33 M1.6 6.8 H33 M1.6 0.4 L0.4 2 V5.2 L1.6 6.8" fill="none" stroke="#6fae7c" stroke-width="0.7"/></svg>
<span style="left:509.80px;top:297.44px;font-size:5.6px;line-height:6.72px;color:#f2f2f2;">16&#x27;d27</span>
<div style="left:503.8px;top:309.2px;width:2.6px;height:0.7px;background:#c02020;"></div>
<svg style="left:506px;top:305.9px;" width="33" height="7.2" viewBox="0 0 33 7.2"><path d="M1.6 0.4 H33 M1.6 6.8 H33 M1.6 0.4 L0.4 2 V5.2 L1.6 6.8" fill="none" stroke="#6fae7c" stroke-width="0.7"/></svg>
<span style="left:509.80px;top:306.84px;font-size:5.6px;line-height:6.72px;color:#f2f2f2;transform:scaleX(1.034);transform-origin:0 0;">16&#x27;d837</span>
<div style="left:357.6px;top:498px;width:500.2px;height:2.4px;background:#fff;"></div>
<div style="left:357.6px;top:500.4px;width:86px;height:11px;background:#808080;"></div>
<div style="left:446.2px;top:500.4px;width:53.8px;height:11px;background:#808080;"></div>
<div style="left:357.6px;top:511.4px;width:25.6px;height:10px;background:#808080;"></div>
<div style="left:383.2px;top:511.4px;width:60.4px;height:10px;background:#fff;"></div>
<div style="left:446.2px;top:511.4px;width:53.8px;height:10px;background:#fff;"></div>
<div style="left:502.2px;top:500.4px;width:355.6px;height:21px;background:#000;"></div>
<div style="left:362.2px;top:504.3px;width:3.6px;height:3.4px;background:#5a6a8a;"></div>
<div style="left:368.2px;top:504.1px;width:4.4px;height:3.8px;background:#7ab0f0;border:0.4px solid #cfe0ff;"></div>
<div style="left:375.2px;top:503.8px;width:4.4px;height:4.4px;background:#6ad06a;border-radius:50%;border:0.5px solid #c8f0c8;"></div>
<div style="left:363.1px;top:515.1px;width:4.6px;height:3.8px;background:#e8b040;border-radius:0.6px;"></div>
<div style="left:364.1px;top:513.6px;width:2.6px;height:2.4px;background:none;border:0.6px solid #e8b040;border-radius:50% 50% 0 0;"></div>
<svg style="left:370px;top:514px;" width="5.6" height="5.6" viewBox="0 0 5.6 5.6"><path d="M0.8 5 L4.6 1" stroke="#4a8ae8" stroke-width="1.3"/></svg>
<div style="left:377.4px;top:514.8px;width:4.4px;height:4.4px;background:#e05a5a;border-radius:50%;"></div>
<div style="left:378.3px;top:516.65px;width:2.6px;height:0.7px;background:#fff;"></div>
<span style="left:426.50px;top:503.02px;font-size:6.3px;line-height:7.56px;color:#efefef;transform:scaleX(0.952);transform-origin:0 0;">Now</span>
<span style="left:478.40px;top:503.02px;font-size:6.3px;line-height:7.56px;color:#efefef;transform:scaleX(0.867);transform-origin:0 0;">100 ns</span>
<span style="left:415.70px;top:513.82px;font-size:6.3px;line-height:7.56px;color:#333;transform:scaleX(0.944);transform-origin:0 0;">Cursor 1</span>
<span style="left:478.40px;top:513.82px;font-size:6.3px;line-height:7.56px;color:#333;transform:scaleX(0.867);transform-origin:0 0;">173 ns</span>
<svg style="left:502.2px;top:500.6px;" width="355.6" height="3.2" viewBox="0 0 355.6 3.2"><rect x="1.05" y="0.2" width="0.7" height="2.6" fill="#19b84a"/><rect x="4.57" y="1.2" width="0.7" height="1.4" fill="#19b84a"/><rect x="8.09" y="1.2" width="0.7" height="1.4" fill="#19b84a"/><rect x="11.62" y="1.2" width="0.7" height="1.4" fill="#19b84a"/><rect x="15.14" y="1.2" width="0.7" height="1.4" fill="#19b84a"/><rect x="18.66" y="1.2" width="0.7" height="1.4" fill="#19b84a"/><rect x="22.18" y="1.2" width="0.7" height="1.4" fill="#19b84a"/><rect x="25.70" y="1.2" width="0.7" height="1.4" fill="#19b84a"/><rect x="29.23" y="1.2" width="0.7" height="1.4" fill="#19b84a"/><rect x="32.75" y="1.2" width="0.7" height="1.4" fill="#19b84a"/><rect x="36.27" y="0.2" width="0.7" height="2.6" fill="#19b84a"/><rect x="39.79" y="1.2" width="0.7" height="1.4" fill="#19b84a"/><rect x="43.31" y="1.2" width="0.7" height="1.4" fill="#19b84a"/><rect x="46.84" y="1.2" width="0.7" height="1.4" fill="#19b84a"/><rect x="50.36" y="1.2" width="0.7" height="1.4" fill="#19b84a"/><rect x="53.88" y="1.2" width="0.7" height="1.4" fill="#19b84a"/><rect x="57.40" y="1.2" width="0.7" height="1.4" fill="#19b84a"/><rect x="60.92" y="1.2" width="0.7" height="1.4" fill="#19b84a"/><rect x="64.45" y="1.2" width="0.7" height="1.4" fill="#19b84a"/><rect x="67.97" y="1.2" width="0.7" height="1.4" fill="#19b84a"/><rect x="71.49" y="0.2" width="0.7" height="2.6" fill="#19b84a"/><rect x="75.01" y="1.2" width="0.7" height="1.4" fill="#19b84a"/><rect x="78.53" y="1.2" width="0.7" height="1.4" fill="#19b84a"/><rect x="82.06" y="1.2" width="0.7" height="1.4" fill="#19b84a"/><rect x="85.58" y="1.2" width="0.7" height="1.4" fill="#19b84a"/><rect x="89.10" y="1.2" width="0.7" height="1.4" fill="#19b84a"/><rect x="92.62" y="1.2" width="0.7" height="1.4" fill="#19b84a"/><rect x="96.14" y="1.2" width="0.7" height="1.4" fill="#19b84a"/><rect x="99.67" y="1.2" width="0.7" height="1.4" fill="#19b84a"/><rect x="103.19" y="1.2" width="0.7" height="1.4" fill="#19b84a"/><rect x="106.71" y="0.2" width="0.7" height="2.6" fill="#19b84a"/><rect x="110.23" y="1.2" width="0.7" height="1.4" fill="#19b84a"/><rect x="113.75" y="1.2" width="0.7" height="1.4" fill="#19b84a"/><rect x="117.28" y="1.2" width="0.7" height="1.4" fill="#19b84a"/><rect x="120.80" y="1.2" width="0.7" height="1.4" fill="#19b84a"/><rect x="124.32" y="1.2" width="0.7" height="1.4" fill="#19b84a"/><rect x="127.84" y="1.2" width="0.7" height="1.4" fill="#19b84a"/><rect x="131.36" y="1.2" width="0.7" height="1.4" fill="#19b84a"/><rect x="134.89" y="1.2" width="0.7" height="1.4" fill="#19b84a"/><rect x="138.41" y="1.2" width="0.7" height="1.4" fill="#19b84a"/><rect x="141.93" y="0.2" width="0.7" height="2.6" fill="#19b84a"/><rect x="145.45" y="1.2" width="0.7" height="1.4" fill="#19b84a"/><rect x="148.97" y="1.2" width="0.7" height="1.4" fill="#19b84a"/><rect x="152.50" y="1.2" width="0.7" height="1.4" fill="#19b84a"/><rect x="156.02" y="1.2" width="0.7" height="1.4" fill="#19b84a"/><rect x="159.54" y="1.2" width="0.7" height="1.4" fill="#19b84a"/><rect x="163.06" y="1.2" width="0.7" height="1.4" fill="#19b84a"/><rect x="166.58" y="1.2" width="0.7" height="1.4" fill="#19b84a"/><rect x="170.11" y="1.2" width="0.7" height="1.4" fill="#19b84a"/><rect x="173.63" y="1.2" width="0.7" height="1.4" fill="#19b84a"/><rect x="177.15" y="0.2" width="0.7" height="2.6" fill="#19b84a"/><rect x="180.67" y="1.2" width="0.7" height="1.4" fill="#19b84a"/><rect x="184.19" y="1.2" width="0.7" height="1.4" fill="#19b84a"/><rect x="187.72" y="1.2" width="0.7" height="1.4" fill="#19b84a"/><rect x="191.24" y="1.2" width="0.7" height="1.4" fill="#19b84a"/><rect x="194.76" y="1.2" width="0.7" height="1.4" fill="#19b84a"/><rect x="198.28" y="1.2" width="0.7" height="1.4" fill="#19b84a"/><rect x="201.80" y="1.2" width="0.7" height="1.4" fill="#19b84a"/><rect x="205.33" y="1.2" width="0.7" height="1.4" fill="#19b84a"/><rect x="208.85" y="1.2" width="0.7" height="1.4" fill="#19b84a"/><rect x="212.37" y="0.2" width="0.7" height="2.6" fill="#19b84a"/><rect x="215.89" y="1.2" width="0.7" height="1.4" fill="#19b84a"/><rect x="219.41" y="1.2" width="0.7" height="1.4" fill="#19b84a"/><rect x="222.94" y="1.2" width="0.7" height="1.4" fill="#19b84a"/><rect x="226.46" y="1.2" width="0.7" height="1.4" fill="#19b84a"/><rect x="229.98" y="1.2" width="0.7" height="1.4" fill="#19b84a"/><rect x="233.50" y="1.2" width="0.7" height="1.4" fill="#19b84a"/><rect x="237.02" y="1.2" width="0.7" height="1.4" fill="#19b84a"/><rect x="240.55" y="1.2" width="0.7" height="1.4" fill="#19b84a"/><rect x="244.07" y="1.2" width="0.7" height="1.4" fill="#19b84a"/><rect x="247.59" y="0.2" width="0.7" height="2.6" fill="#19b84a"/><rect x="251.11" y="1.2" width="0.7" height="1.4" fill="#19b84a"/><rect x="254.63" y="1.2" width="0.7" height="1.4" fill="#19b84a"/><rect x="258.16" y="1.2" width="0.7" height="1.4" fill="#19b84a"/><rect x="261.68" y="1.2" width="0.7" height="1.4" fill="#19b84a"/><rect x="265.20" y="1.2" width="0.7" height="1.4" fill="#19b84a"/><rect x="268.72" y="1.2" width="0.7" height="1.4" fill="#19b84a"/><rect x="272.24" y="1.2" width="0.7" height="1.4" fill="#19b84a"/><rect x="275.77" y="1.2" width="0.7" height="1.4" fill="#19b84a"/><rect x="279.29" y="1.2" width="0.7" height="1.4" fill="#19b84a"/><rect x="282.81" y="0.2" width="0.7" height="2.6" fill="#19b84a"/><rect x="286.33" y="1.2" width="0.7" height="1.4" fill="#19b84a"/><rect x="289.85" y="1.2" width="0.7" height="1.4" fill="#19b84a"/><rect x="293.38" y="1.2" width="0.7" height="1.4" fill="#19b84a"/><rect x="296.90" y="1.2" width="0.7" height="1.4" fill="#19b84a"/><rect x="300.42" y="1.2" width="0.7" height="1.4" fill="#19b84a"/><rect x="303.94" y="1.2" width="0.7" height="1.4" fill="#19b84a"/><rect x="307.46" y="1.2" width="0.7" height="1.4" fill="#19b84a"/><rect x="310.99" y="1.2" width="0.7" height="1.4" fill="#19b84a"/><rect x="314.51" y="1.2" width="0.7" height="1.4" fill="#19b84a"/><rect x="318.03" y="0.2" width="0.7" height="2.6" fill="#19b84a"/><rect x="321.55" y="1.2" width="0.7" height="1.4" fill="#19b84a"/><rect x="325.07" y="1.2" width="0.7" height="1.4" fill="#19b84a"/><rect x="328.60" y="1.2" width="0.7" height="1.4" fill="#19b84a"/><rect x="332.12" y="1.2" width="0.7" height="1.4" fill="#19b84a"/><rect x="335.64" y="1.2" width="0.7" height="1.4" fill="#19b84a"/><rect x="339.16" y="1.2" width="0.7" height="1.4" fill="#19b84a"/><rect x="342.68" y="1.2" width="0.7" height="1.4" fill="#19b84a"/><rect x="346.21" y="1.2" width="0.7" height="1.4" fill="#19b84a"/><rect x="349.73" y="1.2" width="0.7" height="1.4" fill="#19b84a"/><rect x="353.25" y="0.2" width="0.7" height="2.6" fill="#19b84a"/></svg>
<span style="left:503.00px;top:505.42px;font-size:6.3px;line-height:7.56px;color:#19b84a;transform:scaleX(0.811);transform-origin:0 0;">ns</span>
<span style="left:565.74px;top:505.22px;font-size:6.3px;line-height:7.56px;color:#19b84a;transform:scaleX(0.878);transform-origin:0 0;">200 ns</span>
<span style="left:636.18px;top:505.22px;font-size:6.3px;line-height:7.56px;color:#19b84a;transform:scaleX(0.878);transform-origin:0 0;">400 ns</span>
<span style="left:706.62px;top:505.22px;font-size:6.3px;line-height:7.56px;color:#19b84a;transform:scaleX(0.878);transform-origin:0 0;">600 ns</span>
<span style="left:777.06px;top:505.22px;font-size:6.3px;line-height:7.56px;color:#19b84a;transform:scaleX(0.878);transform-origin:0 0;">800 ns</span>
<span style="left:846.00px;top:505.22px;font-size:6.3px;line-height:7.56px;color:#19b84a;transform:scaleX(1.008);transform-origin:0 0;">100</span>
<div style="left:855.6px;top:504px;width:2.2px;height:9px;background:#000;"></div>
<div style="left:502.2px;top:512px;width:355.6px;height:0.6px;background:#4a4a4a;"></div>
<div style="left:563.6px;top:272.6px;width:2px;height:241.4px;background:#f4c42c;"></div>
<div style="left:554.7px;top:513.2px;width:19.9px;height:8.1px;background:#000;border:0.8px solid #d8a820;"></div>
<span style="left:556.40px;top:513.82px;font-size:6.3px;line-height:7.56px;color:#f4e6a0;transform:scaleX(0.878);transform-origin:0 0;">173 ns</span>
<div style="left:356.8px;top:523.4px;width:4.7px;height:9px;background:#808080;"></div>
<div style="left:361.5px;top:523.4px;width:82.1px;height:8.8px;background:#f6f6f6;border:0.5px solid #e2e2e2;"></div>
<div style="left:361.5px;top:523.4px;width:8.8px;height:8.8px;background:#f0f0f0;border:0.5px solid #e4e4e4;border-right-color:#9a9a9a;border-bottom-color:#9a9a9a;"></div>
<div style="left:434.8px;top:523.4px;width:8.8px;height:8.8px;background:#f0f0f0;border:0.5px solid #e4e4e4;border-right-color:#9a9a9a;border-bottom-color:#9a9a9a;"></div>
<svg style="left:364.1px;top:525.5px;" width="3.4" height="4.6" viewBox="0 0 3.4 4.6"><polygon points="3.1,0.3 3.1,4.3 0.4,2.3" fill="#8c8c8c"/></svg>
<svg style="left:437.6px;top:525.5px;" width="3.4" height="4.6" viewBox="0 0 3.4 4.6"><polygon points="0.3,0.3 0.3,4.3 3,2.3" fill="#8c8c8c"/></svg>
<div style="left:361.5px;top:532.2px;width:82.1px;height:0.7px;background:#6a6a6a;"></div>
<div style="left:446.2px;top:532.2px;width:53.8px;height:0.7px;background:#6a6a6a;"></div>
<div style="left:446.2px;top:523.4px;width:53.8px;height:8.8px;background:#f6f6f6;border:0.5px solid #e2e2e2;"></div>
<div style="left:446.2px;top:523.4px;width:8.8px;height:8.8px;background:#f0f0f0;border:0.5px solid #e4e4e4;border-right-color:#9a9a9a;border-bottom-color:#9a9a9a;"></div>
<div style="left:491.2px;top:523.4px;width:8.8px;height:8.8px;background:#f0f0f0;border:0.5px solid #e4e4e4;border-right-color:#9a9a9a;border-bottom-color:#9a9a9a;"></div>
<svg style="left:448.8px;top:525.5px;" width="3.4" height="4.6" viewBox="0 0 3.4 4.6"><polygon points="3.1,0.3 3.1,4.3 0.4,2.3" fill="#8c8c8c"/></svg>
<svg style="left:494px;top:525.5px;" width="3.4" height="4.6" viewBox="0 0 3.4 4.6"><polygon points="0.3,0.3 0.3,4.3 3,2.3" fill="#8c8c8c"/></svg>
<div style="left:502.2px;top:523.4px;width:355.6px;height:8.8px;background:#f6f6f6;border:0.5px solid #e2e2e2;"></div>
<div style="left:502.2px;top:523.4px;width:8.8px;height:8.8px;background:#f0f0f0;border:0.5px solid #e4e4e4;border-right-color:#9a9a9a;border-bottom-color:#9a9a9a;"></div>
<div style="left:849px;top:523.4px;width:8.8px;height:8.8px;background:#f0f0f0;border:0.5px solid #e4e4e4;border-right-color:#9a9a9a;border-bottom-color:#9a9a9a;"></div>
<svg style="left:504.8px;top:525.5px;" width="3.4" height="4.6" viewBox="0 0 3.4 4.6"><polygon points="3.1,0.3 3.1,4.3 0.4,2.3" fill="#000"/></svg>
<svg style="left:851.8px;top:525.5px;" width="3.4" height="4.6" viewBox="0 0 3.4 4.6"><polygon points="0.3,0.3 0.3,4.3 3,2.3" fill="#000"/></svg>
<div style="left:510.8px;top:523.4px;width:334.8px;height:8.8px;background:#f6f6f6;border:0.5px solid #d0d0d0;"></div>
<div style="left:569px;top:524.4px;width:0.8px;height:6.8px;background:#f0dc90;"></div>
<div style="left:860.4px;top:273.2px;width:8.2px;height:10.8px;background:#7a7a7a;"></div>
<div style="left:860.4px;top:285.8px;width:8.2px;height:212.2px;background:#f6f6f6;border:0.5px solid #e4e4e4;"></div>
<div style="left:860.4px;top:285.8px;width:8.2px;height:8.2px;background:#f0f0f0;border:0.5px solid #e4e4e4;border-right-color:#9a9a9a;border-bottom-color:#9a9a9a;"></div>
<div style="left:860.4px;top:489.8px;width:8.2px;height:8.2px;background:#f0f0f0;border:0.5px solid #e4e4e4;border-right-color:#9a9a9a;border-bottom-color:#9a9a9a;"></div>
<svg style="left:862.2px;top:288.2px;" width="4.6" height="3.2" viewBox="0 0 4.6 3.2"><polygon points="0.3,2.9 4.3,2.9 2.3,0.3" fill="#1a1a1a"/></svg>
<svg style="left:862.2px;top:492.4px;" width="4.6" height="3.2" viewBox="0 0 4.6 3.2"><polygon points="0.3,0.3 4.3,0.3 2.3,2.9" fill="#1a1a1a"/></svg>
<div style="left:860.4px;top:500.4px;width:8.2px;height:21px;background:#7a7a7a;"></div>
<div style="left:860.4px;top:523.4px;width:8.2px;height:8.8px;background:#7a7a7a;"></div>
<div style="left:354.8px;top:535.6px;width:55.8px;height:11.4px;background:#d6d6d6;border:0.7px solid #6a6a6a;border-top:1px solid #3c3c3c;border-bottom-color:#8c8c8c;border-radius:0 0 2px 2px;"></div>
<div style="left:357.8px;top:538.3px;width:6.8px;height:7px;background:#e8f0fc;border:0.7px solid #4a78c8;border-radius:0.8px;"></div>
<span style="left:359.60px;top:540.32px;font-size:3.8px;line-height:4.56px;color:#4a78c8;">h</span>
<span style="left:368.00px;top:538.02px;font-size:6.3px;line-height:7.56px;color:#2b2b2b;transform:scaleX(0.993);transform-origin:0 0;">full_adder.v</span>
<span style="left:404.60px;top:538.20px;font-size:6px;line-height:7.2px;color:#9c9c9c;">×</span>
<div style="left:410.6px;top:535.6px;width:65px;height:11.4px;background:#d6d6d6;border:0.7px solid #6a6a6a;border-top:1px solid #3c3c3c;border-bottom-color:#8c8c8c;border-radius:0 0 2px 2px;"></div>
<div style="left:413.6px;top:538.3px;width:6.8px;height:7px;background:#e8f0fc;border:0.7px solid #4a78c8;border-radius:0.8px;"></div>
<span style="left:415.40px;top:540.32px;font-size:3.8px;line-height:4.56px;color:#4a78c8;">h</span>
<span style="left:423.80px;top:538.02px;font-size:6.3px;line-height:7.56px;color:#2b2b2b;transform:scaleX(0.992);transform-origin:0 0;">full_adder_tb.v</span>
<span style="left:469.60px;top:538.20px;font-size:6px;line-height:7.2px;color:#9c9c9c;">×</span>
<div style="left:475.6px;top:535.6px;width:51.2px;height:11.4px;background:#d6d6d6;border:0.7px solid #6a6a6a;border-top:1px solid #3c3c3c;border-bottom-color:#8c8c8c;border-radius:0 0 2px 2px;"></div>
<div style="left:478.6px;top:538.3px;width:6.8px;height:7px;background:#e8f0fc;border:0.7px solid #4a78c8;border-radius:0.8px;"></div>
<span style="left:480.40px;top:540.32px;font-size:3.8px;line-height:4.56px;color:#4a78c8;">h</span>
<span style="left:488.80px;top:538.02px;font-size:6.3px;line-height:7.56px;color:#2b2b2b;transform:scaleX(0.989);transform-origin:0 0;">ripple17.v</span>
<span style="left:520.80px;top:538.20px;font-size:6px;line-height:7.2px;color:#9c9c9c;">×</span>
<div style="left:566px;top:536px;width:292.6px;height:12.4px;background:#f5f5f5;border-top:0.8px solid #6a6a6a;"></div>
<div style="left:526.8px;top:534.6px;width:39.2px;height:13px;background:#ffffff;border:0.6px solid #8a8a8a;border-top:none;border-radius:0 0 2px 2px;"></div>
<div style="left:530.1px;top:538.6px;width:6.6px;height:6px;background:#0a2a1a;border:0.6px solid #111;"></div>
<div style="left:531.4px;top:539.8px;width:4px;height:0.8px;background:#2ad06a;"></div>
<div style="left:532.8px;top:541.4px;width:1px;height:2.4px;background:#2ad06a;"></div>
<span style="left:539.40px;top:538.22px;font-size:6.3px;line-height:7.56px;color:#2b2b2b;transform:scaleX(1.033);transform-origin:0 0;">Wave</span>
<span style="left:558.60px;top:538.20px;font-size:6px;line-height:7.2px;color:#9c9c9c;">×</span>
<div style="left:861.6px;top:537px;width:3.8px;height:8.6px;background:#f0f0f0;border:0.5px solid #c0c0c0;"></div>
<div style="left:865.4px;top:537px;width:3.8px;height:8.6px;background:#f0f0f0;border:0.5px solid #c0c0c0;"></div>
<svg style="left:862.4px;top:539.8px;" width="2.2" height="3" viewBox="0 0 2.2 3"><polygon points="2,0.2 2,2.8 0.2,1.5" fill="#555"/></svg>
<svg style="left:866.2px;top:539.8px;" width="2.2" height="3" viewBox="0 0 2.2 3"><polygon points="0.2,0.2 0.2,2.8 2,1.5" fill="#555"/></svg>
<svg style="left:29.6px;top:553.6px;" width="7" height="8.4" viewBox="0 0 7 8.4"><path d="M1 7.6 V2.6 A1.6 1.6 0 0 1 2.6 1 H4.4 A1.6 1.6 0 0 1 6 2.6 V7.6 L4.8 6.2 H2.2 Z" fill="#fff" stroke="#333" stroke-width="0.8"/></svg>
<span style="left:39.00px;top:553.92px;font-size:6.3px;line-height:7.56px;color:#2b2b2b;transform:scaleX(0.951);transform-origin:0 0;">Transcript</span>
<div style="left:69px;top:556.3px;width:774px;height:0.7px;background:#a8a8a8;"></div>
<div style="left:69px;top:558.6px;width:774px;height:0.7px;background:#a8a8a8;"></div>
<div style="left:452.6px;top:555.6px;width:8px;height:4.4px;background:#f0f0f0;"></div>
<span style="left:453.10px;top:555.24px;font-size:4.6px;line-height:5.52px;color:#9a9a9a;transform:scaleX(1.370);transform-origin:0 0;">::::</span>
<div style="left:845.8px;top:554px;width:7.4px;height:7.6px;background:#f6f6f6;border:0.5px solid #dcdcdc;"></div>
<div style="left:853.8px;top:554px;width:7.4px;height:7.6px;background:#f6f6f6;border:0.5px solid #dcdcdc;"></div>
<div style="left:861.8px;top:554px;width:7.4px;height:7.6px;background:#f6f6f6;border:0.5px solid #dcdcdc;"></div>
<svg style="left:846px;top:554.4px;" width="6.8" height="6.8" viewBox="0 0 6.8 6.8"><path d="M2.8 1 V5.8 M0.4 3.4 H5.2" stroke="#222" stroke-width="1"/><path d="M5.9 0.8 V6" stroke="#222" stroke-width="0.6"/></svg>
<svg style="left:854px;top:554.4px;" width="6.8" height="6.8" viewBox="0 0 6.8 6.8"><rect x="1" y="3" width="3" height="3" fill="none" stroke="#222" stroke-width="0.8"/><path d="M3.2 1.2 H5.8 V4 M5.8 1.2 L3.6 3.4" fill="none" stroke="#222" stroke-width="0.9"/></svg>
<svg style="left:862px;top:554.4px;" width="6.8" height="6.8" viewBox="0 0 6.8 6.8"><path d="M1.2 1.4 L5.6 5.6 M5.6 1.4 L1.2 5.6" stroke="#222" stroke-width="0.95"/></svg>
<div style="left:29px;top:562.4px;width:830.8px;height:43.2px;background:#ffffff;border:1px solid #8a8a8a;border-right:0.6px solid #c8c8c8;border-bottom:0.6px solid #c8c8c8;"></div>
<div style="left:860.4px;top:562.6px;width:9px;height:42.8px;background:#f6f6f6;border:0.5px solid #e4e4e4;"></div>
<div style="left:860.4px;top:562.6px;width:9px;height:9px;background:#f0f0f0;border:0.5px solid #e4e4e4;border-right-color:#9a9a9a;border-bottom-color:#9a9a9a;"></div>
<div style="left:860.4px;top:596.4px;width:9px;height:9px;background:#f0f0f0;border:0.5px solid #e4e4e4;border-right-color:#9a9a9a;border-bottom-color:#9a9a9a;"></div>
<svg style="left:862.6px;top:565.4px;" width="4.6" height="3.2" viewBox="0 0 4.6 3.2"><polygon points="0.3,2.9 4.3,2.9 2.3,0.3" fill="#1a1a1a"/></svg>
<svg style="left:862.6px;top:599.4px;" width="4.6" height="3.2" viewBox="0 0 4.6 3.2"><polygon points="0.3,0.3 4.3,0.3 2.3,2.9" fill="#1a1a1a"/></svg>
<span style="left:30.60px;top:564.16px;font-size:6.4px;line-height:7.68px;color:#3c3c3c;font-family:'Liberation Mono', monospace;-webkit-text-stroke:0.05px;">add wave -position insertpoint  \</span>
<span style="left:30.60px;top:572.36px;font-size:6.4px;line-height:7.68px;color:#3c3c3c;font-family:'Liberation Mono', monospace;-webkit-text-stroke:0.05px;">sim:/full_adder_tb/Sum</span>
<span style="left:30.60px;top:579.72px;font-size:6.3px;line-height:7.56px;color:#2e2e9e;transform:scaleX(0.913);transform-origin:0 0;">VSIM 4&gt;</span>
<span style="left:56.60px;top:579.76px;font-size:6.4px;line-height:7.68px;color:#3c3c3c;font-family:'Liberation Mono', monospace;-webkit-text-stroke:0.05px;transform:scaleX(0.990);transform-origin:0 0;">run</span>
<span style="left:30.60px;top:596.42px;font-size:6.3px;line-height:7.56px;color:#2e2e9e;transform:scaleX(0.913);transform-origin:0 0;">VSIM 5&gt;</span>
<div style="left:29.4px;top:607px;width:92.4px;height:9.6px;background:#f0f0f0;border-top:0.6px solid #c4c4c4;border-left:0.6px solid #c4c4c4;border-right:0.6px solid #fafafa;"></div>
<div style="left:123.2px;top:607px;width:49.8px;height:9.6px;background:#f0f0f0;border-top:0.6px solid #c4c4c4;border-left:0.6px solid #c4c4c4;border-right:0.6px solid #fafafa;"></div>
<div style="left:174.6px;top:607px;width:109.2px;height:9.6px;background:#f0f0f0;border-top:0.6px solid #c4c4c4;border-left:0.6px solid #c4c4c4;border-right:0.6px solid #fafafa;"></div>
<div style="left:285px;top:607px;width:573px;height:9.6px;background:#f0f0f0;border-top:0.6px solid #c4c4c4;border-left:0.6px solid #c4c4c4;border-right:0.6px solid #fafafa;"></div>
<span style="left:32.20px;top:609.42px;font-size:6.3px;line-height:7.56px;color:#2b2b2b;transform:scaleX(0.940);transform-origin:0 0;">0 ns to 1 us</span>
<span style="left:126.00px;top:609.42px;font-size:6.3px;line-height:7.56px;color:#2b2b2b;transform:scaleX(0.961);transform-origin:0 0;">Project : opel_10</span>
<span style="left:177.00px;top:609.42px;font-size:6.3px;line-height:7.56px;color:#2b2b2b;transform:scaleX(0.980);transform-origin:0 0;">Now: 100 ns  Delta: 0</span>
<span style="left:287.60px;top:609.42px;font-size:6.3px;line-height:7.56px;color:#2b2b2b;transform:scaleX(0.958);transform-origin:0 0;">sim:/full_adder_tb</span>
<svg style="left:861px;top:608px;" width="9" height="9" viewBox="0 0 9 9"><path d="M8.4 2 L2 8.4 M8.4 5 L5 8.4" stroke="#b4b4b4" stroke-width="0.8"/></svg>
<div style="left:27.8px;top:549.6px;width:842.2px;height:1.6px;background:#cdcdcd;"></div>
<div style="left:28.8px;top:176px;width:2px;height:0.8px;background:#666;"></div>
<div style="left:33.6px;top:176px;width:2.2px;height:0.8px;background:#777;"></div>
<div style="left:27px;top:190px;width:0.8px;height:428px;background:#b4b4b4;"></div>
</body></html>
